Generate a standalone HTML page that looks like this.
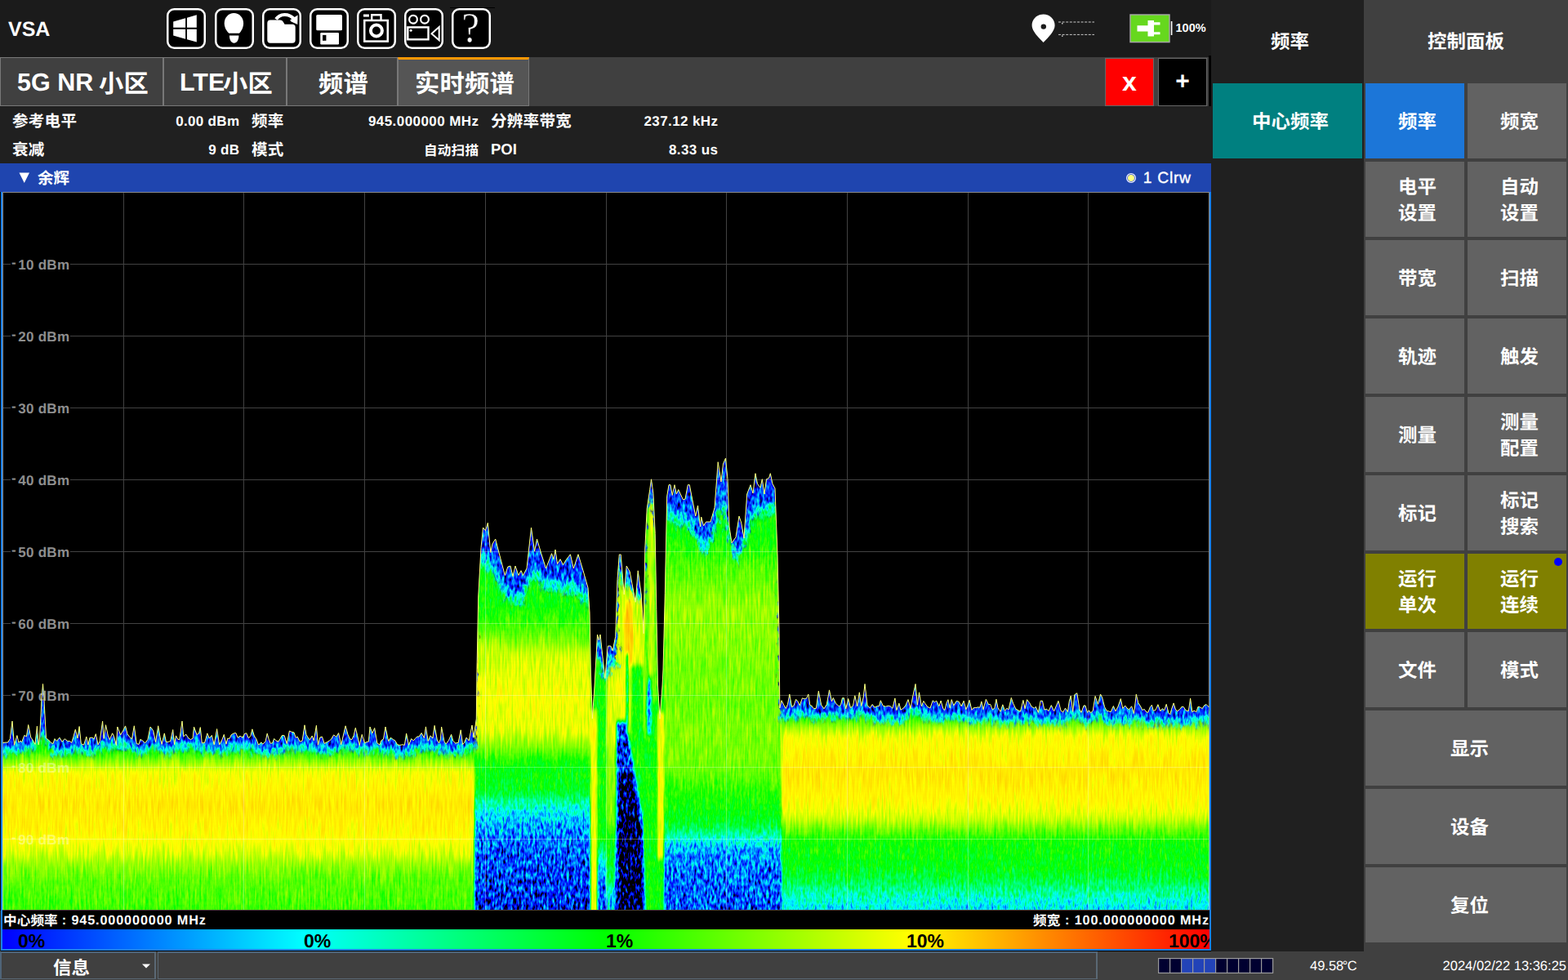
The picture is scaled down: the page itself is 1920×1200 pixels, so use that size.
<!DOCTYPE html>
<html lang="zh"><head><meta charset="utf-8"><title>VSA</title><style>
html,body{margin:0;padding:0;background:#000;}
body{width:1920px;height:1200px;position:relative;overflow:hidden;font-family:"Liberation Sans",sans-serif;text-rendering:geometricPrecision;-webkit-font-smoothing:antialiased;}
.b,.x,.t{position:absolute;display:block;}
.x{white-space:nowrap;}
.t{overflow:visible;}
.t text.g{font-family:"Liberation Sans","Noto Sans CJK SC",sans-serif;font-weight:bold;font-size:1000px;}
</style></head><body>
<div class="b" style="left:0px;top:0px;width:1483px;height:70px;background:#1b1b1b;"></div>
<div class="b" style="left:0px;top:70px;width:1483px;height:60px;background:#404040;"></div>
<div class="b" style="left:0px;top:130px;width:1483px;height:70px;background:#202020;"></div>
<div class="b" style="left:0px;top:200px;width:1483px;height:36px;background:#1f45af;"></div>
<div class="b" style="left:0px;top:235px;width:1483px;height:930px;background:#000;"></div>
<div class="b" style="left:0px;top:235px;width:1px;height:965px;background:#2a2a2a;"></div>
<div class="b" style="left:1483px;top:0px;width:187px;height:1165px;background:#202020;"></div>
<div class="b" style="left:1670px;top:0px;width:250px;height:1200px;background:#404040;"></div>
<div class="b" style="left:0px;top:1165px;width:1670px;height:35px;background:#404040;"></div>
<div class="b" style="left:1480px;top:68px;width:3px;height:62px;background:#000;"></div>
<div class="b" style="left:1480px;top:130px;width:3px;height:70px;background:#202020;"></div>
<div class="b" style="left:1480px;top:200px;width:3px;height:36px;background:#1f45af;"></div>
<div class="x" style="left:10.00px;top:20.00px;font-size:25.00px;line-height:32px;color:#fff;font-weight:bold;">VSA</div>
<svg class="t" style="left:204px;top:10px;width:48px;height:50px" viewBox="0 0 48 50"><rect x="1.25" y="1.25" width="45.5" height="47.5" rx="8" ry="8" fill="#000" stroke="#fff" stroke-width="2.5"/><g fill="#fff"><path d="M8.2 16.6L23.1 12.3V23.8H8.2Z"/><path d="M25 11.7L36.8 8.3V23.8H25Z"/><path d="M8.2 25.75H23.1V37.7L8.2 33.5Z"/><path d="M25 25.75H36.8V41.6L25 38.3Z"/></g></svg>
<svg class="t" style="left:263px;top:10px;width:48px;height:50px" viewBox="0 0 48 50"><rect x="1.25" y="1.25" width="45.5" height="47.5" rx="8" ry="8" fill="#000" stroke="#fff" stroke-width="2.5"/><g fill="#fff"><path d="M23.4 6C30 6 35.1 11.5 35.1 18.5C35.1 24 32.5 28 30 30.7H17.4C14.5 28 11.7 24 11.7 18.5C11.7 11.5 16.8 6 23.4 6Z"/><path d="M17.9 33.5H29.4C29.4 39 27 42.7 23.6 42.7C20.3 42.7 17.9 39 17.9 33.5Z"/></g></svg>
<svg class="t" style="left:321px;top:10px;width:48px;height:50px" viewBox="0 0 48 50"><rect x="1.25" y="1.25" width="45.5" height="47.5" rx="8" ry="8" fill="#000" stroke="#fff" stroke-width="2.5"/><g fill="#fff"><path d="M6.3 18.5Q6.3 14.6 10 14.6H22Q24.5 14.6 26 17L27.5 19.8H37Q40.7 19.8 40.7 23.5V39Q40.7 42.7 37 42.7H10Q6.3 42.7 6.3 39Z"/></g><path d="M17 13.5C22 6.5 32 6 39 13" fill="none" stroke="#fff" stroke-width="4.2"/><path d="M43.6 8.5L43.3 20L33 15.2Z" fill="#fff"/><path d="M22 13.5C26 10.5 31 10.8 35 15.3L33.5 17.5L27.5 18.8L25.5 15.5Z" fill="#000"/></svg>
<svg class="t" style="left:379px;top:10px;width:48px;height:50px" viewBox="0 0 48 50"><rect x="1.25" y="1.25" width="45.5" height="47.5" rx="8" ry="8" fill="#000" stroke="#fff" stroke-width="2.5"/><rect x="8.25" y="8.1" width="31.75" height="19.1" rx="1.5" fill="#fff"/><rect x="13.25" y="30" width="22.75" height="14.4" rx="1.2" fill="#fff"/><rect x="16" y="32.9" width="4.4" height="6.9" fill="#000"/></svg>
<svg class="t" style="left:437px;top:10px;width:48px;height:50px" viewBox="0 0 48 50"><rect x="1.25" y="1.25" width="45.5" height="47.5" rx="8" ry="8" fill="#000" stroke="#fff" stroke-width="2.5"/><g fill="none" stroke="#fff"><rect x="9.25" y="15" width="28.5" height="25.6" stroke-width="2.5"/><circle cx="23.9" cy="27.5" r="7" stroke-width="4"/><path d="M18.2 15V8.3H29.5V15" stroke-width="2.4"/></g><rect x="8" y="7.5" width="6.9" height="3.1" fill="#fff"/></svg>
<svg class="t" style="left:495px;top:10px;width:48px;height:50px" viewBox="0 0 48 50"><rect x="1.25" y="1.25" width="45.5" height="47.5" rx="8" ry="8" fill="#000" stroke="#fff" stroke-width="2.5"/><g fill="none" stroke="#fff" stroke-width="2.2"><circle cx="11" cy="13.75" r="4.9"/><circle cx="25" cy="13.75" r="4.9"/><rect x="4.3" y="23.4" width="25.2" height="14.9" stroke-width="2.4"/><path d="M33.5 31.2L42.7 23V39.2Z" stroke-width="2"/></g><circle cx="8.1" cy="27.3" r="1.5" fill="#fff"/></svg>
<svg class="t" style="left:553px;top:10px;width:48px;height:50px" viewBox="0 0 48 50"><rect x="1.25" y="1.25" width="45.5" height="47.5" rx="8" ry="8" fill="#000" stroke="#fff" stroke-width="2.5"/><path d="M22.84 32.4H20.94L20.32 23.93L23.72 23.2Q25.77 22.76 26.7 20.99Q27.62 19.22 27.62 15.82Q27.62 12.1 26.36 10.56Q25.1 9.03 21.92 9.03Q19.25 9.03 17.3 10.27L16.47 14.43H14.9V7.99Q18.66 6.9 21.92 6.9Q32 6.9 32 15.52Q32 19.65 30.09 22.16Q28.17 24.67 24.51 25.48L23.15 25.81ZM24.98 38.93Q24.98 40.18 24.16 41.09Q23.34 42 22.13 42Q20.89 42 20.07 41.09Q19.25 40.18 19.25 38.93Q19.25 37.64 20.08 36.75Q20.92 35.87 22.13 35.87Q23.32 35.87 24.15 36.74Q24.98 37.62 24.98 38.93Z" fill="#fff" stroke="#000" stroke-width="0.5"/></svg>
<div class="b" style="left:551px;top:8.6px;width:55px;height:1px;background:#000;"></div>
<svg class="t" style="left:1260px;top:14px;width:84px;height:42px" viewBox="1260 14 84 42"><path d="M1277.6 17.4C1285.5 17.4 1291.6 23.5 1291.6 31C1291.6 38 1284 45.5 1277.6 52C1271.2 45.5 1263.6 38 1263.6 31C1263.6 23.5 1269.7 17.4 1277.6 17.4Z" fill="#fff"/><circle cx="1277.8" cy="32.6" r="3.2" fill="#1b1b1b"/><g stroke="#c8c8c8" stroke-width="1" stroke-dasharray="3 1.6"><path d="M1296 27H1340"/><path d="M1296 42.4H1340"/></g><g fill="#c8c8c8"><rect x="1300" y="28" width="1.5" height="1.5"/><rect x="1300" y="43.4" width="1.5" height="1.5"/></g></svg>
<svg class="t" style="left:1380px;top:14px;width:60px;height:42px" viewBox="1380 14 60 42"><rect x="1384" y="18" width="48" height="33.6" fill="#66d81e" stroke="#a8a8a8" stroke-width="1.4"/><path d="M1392.5 31.2H1405.5V25H1413V27.3H1420.5V30.4H1413V39.2H1420.5V42.3H1413V44.6H1405.5V38.4H1392.5Z" fill="#fff"/><rect x="1433.8" y="26" width="1.6" height="17" fill="#fff"/></svg>
<div class="x" style="left:1439.50px;top:26.00px;font-size:14.50px;line-height:19px;color:#fff;font-weight:bold;">100%</div>
<div class="b" style="left:0px;top:70px;width:200px;height:60px;background:#404040;box-sizing:border-box;border:1px solid #787878;"></div>
<div class="b" style="left:200px;top:70px;width:151px;height:60px;background:#404040;box-sizing:border-box;border:1px solid #787878;"></div>
<div class="b" style="left:351px;top:70px;width:136px;height:60px;background:#404040;box-sizing:border-box;border:1px solid #787878;"></div>
<div class="b" style="left:487px;top:70px;width:161px;height:60px;background:#555555;box-sizing:border-box;border:1px solid #787878;border-top:3px solid #ff9800;"></div>
<div class="x" style="left:21.00px;top:81.00px;font-size:30.50px;line-height:40px;color:#fff;font-weight:bold;">5G NR</div>
<svg class="t" role="img" aria-label="小区" style="left:121.00px;top:85.75px;width:61.00px;height:30.50px;fill:#fff;" viewBox="0 -880 2000 1000"><text class="g" x="0" y="0">小区</text></svg>
<div class="x" style="left:220.00px;top:81.00px;font-size:30.50px;line-height:40px;color:#fff;font-weight:bold;">LTE</div>
<svg class="t" role="img" aria-label="小区" style="left:273.00px;top:85.75px;width:61.00px;height:30.50px;fill:#fff;" viewBox="0 -880 2000 1000"><text class="g" x="0" y="0">小区</text></svg>
<svg class="t" role="img" aria-label="频谱" style="left:390.00px;top:85.75px;width:61.00px;height:30.50px;fill:#fff;" viewBox="0 -880 2000 1000"><text class="g" x="0" y="0">频谱</text></svg>
<svg class="t" role="img" aria-label="实时频谱" style="left:508.00px;top:85.75px;width:122.00px;height:30.50px;fill:#fff;" viewBox="0 -880 4000 1000"><text class="g" x="0" y="0">实时频谱</text></svg>
<div class="b" style="left:1353px;top:70.5px;width:60px;height:59px;background:#ff0000;box-sizing:border-box;border:1px solid #666;"></div>
<div class="b" style="left:1418px;top:70.5px;width:60px;height:59px;background:#000000;box-sizing:border-box;border:1px solid #666;"></div>
<div class="x" style="left:1383.00px;transform:translateX(-50%);top:79.00px;font-size:32.00px;line-height:42px;color:#fff;font-weight:bold;">x</div>
<div class="x" style="left:1448.00px;transform:translateX(-50%);top:79.50px;font-size:30.00px;line-height:39px;color:#fff;font-weight:bold;">+</div>
<svg class="t" role="img" aria-label="参考电平" style="left:15.00px;top:138.10px;width:79.20px;height:19.80px;fill:#fff;" viewBox="0 -880 4000 1000"><text class="g" x="0" y="0">参考电平</text></svg>
<div class="x" style="right:1626.70px;top:137.80px;font-size:17.00px;line-height:22px;color:#fff;font-weight:bold;letter-spacing:0.30px;">0.00 dBm</div>
<svg class="t" role="img" aria-label="频率" style="left:308.00px;top:138.10px;width:39.60px;height:19.80px;fill:#fff;" viewBox="0 -880 2000 1000"><text class="g" x="0" y="0">频率</text></svg>
<div class="x" style="right:1333.57px;top:137.80px;font-size:17.00px;line-height:22px;color:#fff;font-weight:bold;letter-spacing:0.43px;">945.000000 MHz</div>
<svg class="t" role="img" aria-label="分辨率带宽" style="left:601.00px;top:138.10px;width:99.00px;height:19.80px;fill:#fff;" viewBox="0 -880 5000 1000"><text class="g" x="0" y="0">分辨率带宽</text></svg>
<div class="x" style="right:1040.60px;top:137.80px;font-size:17.00px;line-height:22px;color:#fff;font-weight:bold;letter-spacing:0.40px;">237.12 kHz</div>
<svg class="t" role="img" aria-label="衰减" style="left:15.00px;top:173.10px;width:39.60px;height:19.80px;fill:#fff;" viewBox="0 -880 2000 1000"><text class="g" x="0" y="0">衰减</text></svg>
<div class="x" style="right:1626.70px;top:172.80px;font-size:17.00px;line-height:22px;color:#fff;font-weight:bold;letter-spacing:0.30px;">9 dB</div>
<svg class="t" role="img" aria-label="模式" style="left:308.00px;top:173.10px;width:39.60px;height:19.80px;fill:#fff;" viewBox="0 -880 2000 1000"><text class="g" x="0" y="0">模式</text></svg>
<svg class="t" role="img" aria-label="自动扫描" style="left:518.80px;top:174.60px;width:67.20px;height:16.80px;fill:#fff;" viewBox="0 -880 4000 1000"><text class="g" x="0" y="0">自动扫描</text></svg>
<div class="x" style="left:601.00px;top:171.00px;font-size:18.50px;line-height:24px;color:#fff;font-weight:bold;">POI</div>
<div class="x" style="right:1040.60px;top:172.80px;font-size:17.00px;line-height:22px;color:#fff;font-weight:bold;letter-spacing:0.40px;">8.33 us</div>
<svg class="t" style="left:22.5px;top:211px;width:13.5px;height:13.5px" viewBox="0 0 14 14"><path d="M0.5 0.5H13.5L7 13.5Z" fill="#fff"/></svg>
<svg class="t" role="img" aria-label="余辉" style="left:45.50px;top:208.20px;width:39.20px;height:19.60px;fill:#fff;" viewBox="0 -880 2000 1000"><text class="g" x="0" y="0">余辉</text></svg>
<svg class="t" style="left:1378px;top:211px;width:14px;height:14px" viewBox="0 0 14 14"><circle cx="7" cy="7" r="4.6" fill="#ffff80" stroke="#2a50d0" stroke-width="1.2"/><circle cx="7" cy="7" r="5.4" fill="none" stroke="#e8e8ff" stroke-width="1.3"/></svg>
<div class="x" style="right:461.30px;top:206.00px;font-size:19.30px;line-height:25px;color:#fff;font-weight:normal;letter-spacing:0.70px;-webkit-text-stroke:0.35px #fff;">1 Clrw</div>
<svg class="t" style="left:0;top:235px;width:1483px;height:880px;overflow:hidden" viewBox="0 235 1483 880">
<defs>
<filter id="hm" filterUnits="userSpaceOnUse" x="-5" y="236" width="1495" height="895" color-interpolation-filters="sRGB"><feGaussianBlur in="SourceGraphic" stdDeviation="1.2 3" result="b"/><feTurbulence type="fractalNoise" baseFrequency="0.45 0.035" numOctaves="2" seed="5" result="nf0"/><feColorMatrix in="nf0" type="matrix" values="1 0 0 0 0  1 0 0 0 0  1 0 0 0 0  0 0 0 0 1" result="nf"/><feTurbulence type="fractalNoise" baseFrequency="0.36 0.13" numOctaves="2" seed="12" result="ns0"/><feColorMatrix in="ns0" type="matrix" values="1 0 0 0 0  1 0 0 0 0  1 0 0 0 0  0 0 0 0 1" result="ns"/><feComponentTransfer in="b" result="m"><feFuncR type="linear" slope="-1.6" intercept="1"/><feFuncG type="linear" slope="-1.6" intercept="1"/><feFuncB type="linear" slope="-1.6" intercept="1"/></feComponentTransfer><feComposite in="m" in2="ns" operator="arithmetic" k1="1" k2="0" k3="0" k4="0" result="t1"/><feComposite in="b" in2="nf" operator="arithmetic" k1="0" k2="1" k3="0.16" k4="-0.08" result="b0"/><feComposite in="b0" in2="t1" operator="arithmetic" k1="0" k2="1" k3="0.7" k4="0" result="v"/><feComponentTransfer in="m" result="mi"><feFuncR type="linear" slope="-1" intercept="1"/><feFuncG type="linear" slope="-1" intercept="1"/><feFuncB type="linear" slope="-1" intercept="1"/></feComponentTransfer><feComposite in="v" in2="mi" operator="arithmetic" k1="0" k2="1" k3="0.35" k4="-0.35" result="d"/><feComponentTransfer in="d"><feFuncR type="table" tableValues="0 0 0 0 0 0 .5 1 1 1 1"/><feFuncG type="table" tableValues="0 0 .5 1 1 1 1 1 .8 .5 0"/><feFuncB type="table" tableValues="0 1 1 1 .5 0 0 0 0 0 0"/></feComponentTransfer></filter>
<filter id="hf" filterUnits="userSpaceOnUse" x="-5" y="236" width="1495" height="895" color-interpolation-filters="sRGB"><feGaussianBlur in="SourceGraphic" stdDeviation="1.6 3.2" result="b"/><feTurbulence type="fractalNoise" baseFrequency="0.22 0.09" numOctaves="2" seed="3" result="n"/><feDisplacementMap in="b" in2="n" scale="16" xChannelSelector="G" yChannelSelector="R" result="dm"/><feTurbulence type="fractalNoise" baseFrequency="0.33 0.12" numOctaves="2" seed="21" result="s0"/><feColorMatrix in="s0" type="matrix" values="1 0 0 0 0  1 0 0 0 0  1 0 0 0 0  0 0 0 0 1" result="s1"/><feComposite in="dm" in2="s1" operator="arithmetic" k1="0" k2="1" k3="0.5" k4="-0.25" result="dn"/><feComposite in="dn" in2="dm" operator="in" result="dn2"/><feComponentTransfer in="dn2"><feFuncR type="table" tableValues="0 0 0 0 0 0 .5 1 1 1 1"/><feFuncG type="table" tableValues="0 0 .5 1 1 1 1 1 .8 .5 0"/><feFuncB type="table" tableValues="0 1 1 1 .5 0 0 0 0 0 0"/></feComponentTransfer></filter>
<clipPath id="env"><polygon points="3.0,1114.0 3.5,909.4 6.8,909.1 9.5,909.1 12.3,904.7 15.0,883.0 17.5,912.4 20.9,900.6 22.9,909.2 24.8,907.2 26.7,908.6 29.8,900.4 32.4,901.8 34.7,887.5 37.8,903.0 40.0,906.0 43.0,911.4 45.4,889.2 47.2,911.9 48.5,904.0 51.3,851.5 52.5,837.5 53.7,851.5 56.5,904.0 57.3,904.6 59.4,905.9 62.5,909.4 65.0,910.6 67.0,904.6 69.5,907.4 72.9,903.1 76.1,908.3 79.3,904.7 82.6,907.3 85.7,907.6 87.6,909.6 89.8,902.5 92.3,893.2 95.0,904.0 97.1,889.5 99.3,910.7 102.6,912.2 105.8,902.1 107.8,912.2 109.9,903.4 113.1,903.2 115.1,904.9 117.3,898.7 120.1,911.9 122.2,907.4 125.6,883.0 127.1,904.4 129.5,887.7 132.3,900.8 134.4,905.6 137.6,897.8 139.5,901.6 142.4,912.5 143.8,890.0 147.6,899.9 150.7,894.6 153.6,888.9 156.0,898.6 158.7,902.4 161.5,904.9 164.3,888.8 167.3,910.6 170.0,911.4 171.9,905.3 174.7,907.1 177.6,909.8 180.9,905.6 184.0,890.0 185.2,891.2 187.7,894.9 190.6,908.5 193.7,888.8 196.1,903.0 198.1,911.4 201.3,897.9 203.5,908.7 205.8,908.4 208.6,907.7 211.7,893.5 213.6,911.6 215.5,900.9 217.8,905.3 219.8,905.7 223.0,883.0 224.8,901.9 227.6,899.0 230.9,903.9 233.5,905.6 236.1,904.1 237.5,890.0 240.9,899.5 243.4,898.3 245.3,890.6 247.3,909.9 250.6,909.5 253.8,897.9 256.3,903.9 259.3,900.4 262.2,911.8 265.6,892.6 268.7,911.9 271.8,906.1 274.3,899.4 276.9,911.2 278.8,904.1 281.1,904.4 283.2,899.7 286.3,897.9 288.9,897.6 291.1,903.2 294.0,901.3 297.2,903.0 299.6,898.3 301.7,897.8 304.4,903.9 307.0,900.7 308.9,892.8 311.3,901.0 313.9,905.0 316.6,912.2 319.8,908.8 321.8,911.2 325.1,907.7 327.2,898.1 329.2,905.3 331.3,910.3 333.6,909.8 335.6,904.5 338.2,906.9 340.9,908.1 343.3,904.2 345.4,900.4 348.1,900.6 351.3,910.7 354.4,895.0 356.7,896.1 360.1,897.0 362.2,903.4 364.2,902.1 367.3,908.3 370.2,906.9 373.0,887.8 375.0,899.4 377.6,904.0 379.5,905.8 382.2,901.0 384.3,906.9 387.4,888.3 389.4,912.2 391.9,902.9 394.4,902.1 397.2,910.4 400.4,908.7 403.3,906.9 405.4,905.4 408.6,899.9 411.8,902.3 414.6,897.6 417.7,911.9 420.7,899.0 423.1,888.8 426.0,899.4 428.5,904.9 430.8,905.6 433.2,900.5 435.3,891.2 437.7,900.9 440.3,912.5 443.2,899.4 446.5,909.8 449.5,908.3 451.4,908.1 453.0,890.0 456.0,897.8 458.7,891.5 461.8,909.7 464.9,912.0 466.9,906.7 469.5,905.0 472.0,890.0 475.6,907.5 478.4,903.2 481.4,905.6 483.6,906.6 486.6,911.8 489.6,912.4 492.9,911.8 495.4,912.3 497.6,898.0 500.5,912.4 503.6,904.6 506.4,906.9 508.3,904.5 510.8,901.9 513.0,902.1 516.1,897.5 519.4,903.6 521.4,889.9 524.2,907.4 527.1,900.8 529.9,904.0 532.1,888.4 535.3,905.9 537.5,909.9 539.5,904.9 540.6,890.0 544.2,908.8 546.4,910.7 549.5,906.3 552.6,899.3 554.8,907.3 557.8,910.1 561.2,909.3 564.2,893.8 566.6,911.6 568.5,909.4 571.1,903.1 574.2,907.0 578.0,888.0 580.0,903.2 583.3,880.0 584.0,820.0 585.7,731.0 589.0,670.7 591.5,646.0 594.5,649.7 597.3,640.3 600.8,676.5 603.0,666.0 606.7,660.0 610.0,673.0 618.3,704.5 621.8,694.0 625.0,693.0 628.0,705.7 631.0,693.0 635.0,704.5 638.0,698.7 640.5,704.5 645.0,696.0 650.5,646.0 654.5,675.0 657.5,660.0 662.7,677.7 668.5,696.0 675.5,677.7 678.0,684.7 680.0,673.0 682.5,690.5 686.0,684.7 689.5,691.7 693.0,685.8 698.4,678.8 702.3,696.0 708.0,678.8 714.0,698.7 720.0,719.7 722.0,750.0 723.3,820.0 725.3,880.0 728.0,840.0 731.5,777.0 733.4,784.0 735.0,777.0 740.8,830.7 744.3,791.0 747.8,791.0 750.2,796.8 753.7,779.3 756.0,709.3 758.3,679.0 760.2,679.0 764.2,728.0 767.2,693.0 771.2,700.0 778.2,737.3 781.2,698.8 785.2,728.0 788.2,775.8 789.8,672.0 792.2,623.0 795.7,599.7 797.5,586.8 799.9,604.3 802.2,653.3 803.8,746.7 805.5,840.0 808.0,880.0 811.0,840.0 812.0,820.0 814.3,726.7 816.7,607.7 819.0,593.7 821.0,593.7 823.2,606.5 826.0,593.7 828.3,605.0 830.7,599.5 836.5,612.0 839.0,611.0 842.3,593.7 844.3,593.7 851.7,632.0 854.5,619.0 857.5,645.0 858.7,633.0 861.5,643.8 864.5,639.0 870.0,639.0 875.0,621.7 879.2,565.7 883.0,590.0 885.5,568.0 888.5,561.0 891.0,586.7 893.0,645.0 896.0,664.8 901.0,657.8 905.0,632.0 907.7,640.0 911.0,659.0 914.7,605.0 919.0,593.7 922.0,604.0 925.0,579.7 927.5,592.5 931.0,597.0 933.3,586.7 936.0,605.0 938.5,586.7 941.5,585.5 943.3,579.7 946.0,592.5 949.0,598.0 952.0,680.0 954.0,773.0 954.8,867.0 957.0,857.7 960.2,864.1 962.5,867.4 964.5,862.2 966.8,850.0 969.6,865.8 972.1,863.8 974.6,856.3 976.7,858.4 979.3,863.7 982.4,854.9 985.4,855.8 987.8,854.8 989.8,850.0 991.8,863.4 993.7,864.0 996.5,867.7 999.4,867.3 1002.3,846.2 1005.7,863.2 1009.0,867.8 1012.3,862.5 1015.5,844.9 1018.5,859.0 1020.3,854.5 1023.6,861.5 1025.7,863.2 1027.6,865.1 1029.6,862.8 1031.4,854.8 1033.5,854.7 1035.7,867.9 1038.7,855.5 1041.5,866.7 1044.5,864.2 1046.8,851.8 1049.7,864.7 1052.3,847.8 1054.7,864.5 1057.2,854.1 1059.0,837.5 1062.1,863.8 1065.3,866.8 1068.2,862.5 1071.0,866.2 1074.4,864.6 1076.3,864.7 1078.3,857.7 1081.3,864.3 1084.5,865.2 1087.7,864.2 1090.5,865.0 1092.9,867.3 1095.9,854.9 1097.8,869.7 1100.9,861.1 1102.9,869.1 1105.9,867.5 1108.9,863.7 1112.0,856.6 1114.9,867.6 1117.3,854.7 1121.0,837.5 1123.3,863.3 1125.5,847.8 1128.4,864.8 1130.9,858.4 1132.8,861.4 1135.8,865.5 1139.0,867.0 1142.2,857.8 1144.4,859.8 1146.7,858.2 1149.9,864.6 1152.1,858.0 1154.9,867.8 1156.9,869.4 1158.8,861.4 1160.9,856.7 1163.2,867.1 1165.2,856.6 1167.8,863.9 1171.2,858.3 1174.2,859.2 1177.1,864.8 1180.1,858.2 1182.9,868.7 1184.8,864.1 1187.1,857.3 1189.9,869.4 1192.0,866.8 1195.1,866.6 1197.4,865.9 1199.8,866.3 1201.8,858.9 1204.0,868.7 1207.3,856.3 1210.6,862.8 1212.7,862.4 1215.0,868.5 1217.7,867.7 1219.9,856.2 1221.9,866.5 1225.0,871.4 1227.8,862.8 1230.4,870.3 1233.1,867.2 1234.9,869.1 1238.3,854.4 1240.6,861.2 1243.7,867.8 1247.0,870.0 1249.5,871.1 1252.9,857.4 1255.1,867.8 1257.5,856.7 1260.6,860.5 1263.2,865.3 1266.5,867.2 1268.3,865.3 1271.4,872.4 1274.2,858.1 1276.5,858.3 1278.8,869.1 1281.7,868.3 1284.0,870.6 1287.3,863.6 1290.6,870.8 1293.6,863.8 1295.9,858.3 1299.2,870.5 1301.7,872.0 1304.5,867.1 1307.4,871.6 1309.3,858.5 1311.2,852.0 1313.7,871.4 1315.7,850.8 1318.8,848.7 1322.0,868.9 1324.0,872.4 1327.1,863.9 1329.0,864.0 1331.5,872.4 1333.5,869.8 1335.5,872.9 1338.2,870.3 1341.1,852.4 1344.5,862.3 1347.5,850.0 1349.6,853.9 1352.6,865.7 1355.3,870.5 1357.4,870.8 1360.1,871.7 1363.4,864.5 1366.0,870.9 1369.0,865.2 1372.3,855.6 1374.8,867.5 1377.7,864.0 1380.0,867.1 1382.5,868.8 1385.6,864.8 1388.6,873.6 1391.3,850.1 1393.8,860.6 1396.6,865.0 1399.0,869.7 1400.9,868.2 1403.9,872.0 1405.8,872.2 1408.4,865.6 1410.4,863.3 1412.3,870.4 1415.0,869.4 1417.9,862.7 1420.9,870.8 1423.2,867.7 1425.7,869.8 1428.2,862.3 1430.9,872.8 1432.8,874.7 1434.6,868.3 1437.1,860.9 1439.2,868.0 1441.3,871.0 1444.2,869.1 1447.2,865.2 1449.4,865.7 1452.2,870.1 1455.4,870.4 1457.6,855.0 1459.8,871.7 1462.0,870.2 1464.9,871.6 1467.0,865.3 1469.6,866.0 1472.1,867.6 1474.8,863.6 1477.1,862.6 1480.5,866.0 1481.0,1114.0"/></clipPath>
<linearGradient id="gl" gradientUnits="userSpaceOnUse" x1="0" y1="880" x2="0" y2="1113"><stop offset="0.0000" stop-color="#808080"/><stop offset="0.1717" stop-color="#858585"/><stop offset="0.2275" stop-color="#9e9e9e"/><stop offset="0.2833" stop-color="#b2b2b2"/><stop offset="0.4506" stop-color="#bebebe"/><stop offset="0.6223" stop-color="#b5b5b5"/><stop offset="0.7082" stop-color="#ababab"/><stop offset="0.7725" stop-color="#9c9c9c"/><stop offset="0.8498" stop-color="#919191"/><stop offset="1.0000" stop-color="#8c8c8c"/></linearGradient>
<linearGradient id="gr" gradientUnits="userSpaceOnUse" x1="0" y1="830" x2="0" y2="1114"><stop offset="0.0000" stop-color="#808080"/><stop offset="0.1690" stop-color="#858585"/><stop offset="0.2113" stop-color="#9e9e9e"/><stop offset="0.2570" stop-color="#b2b2b2"/><stop offset="0.4085" stop-color="#bebebe"/><stop offset="0.5458" stop-color="#b5b5b5"/><stop offset="0.6092" stop-color="#a8a8a8"/><stop offset="0.6549" stop-color="#949494"/><stop offset="0.7042" stop-color="#828282"/><stop offset="0.8239" stop-color="#7d7d7d"/><stop offset="0.8803" stop-color="#707070"/><stop offset="0.9296" stop-color="#5e5e5e"/><stop offset="0.9648" stop-color="#525252"/><stop offset="1.0000" stop-color="#4a4a4a"/></linearGradient>
<linearGradient id="gbl" gradientUnits="userSpaceOnUse" x1="0" y1="600" x2="0" y2="1113"><stop offset="0.0000" stop-color="#808080"/><stop offset="0.2729" stop-color="#808080"/><stop offset="0.3411" stop-color="#919191"/><stop offset="0.3899" stop-color="#a8a8a8"/><stop offset="0.4873" stop-color="#b2b2b2"/><stop offset="0.5750" stop-color="#adadad"/><stop offset="0.6140" stop-color="#999999"/><stop offset="0.6530" stop-color="#808080"/><stop offset="0.7173" stop-color="#7a7a7a"/><stop offset="0.7466" stop-color="#616161"/><stop offset="0.7758" stop-color="#474747"/><stop offset="0.8148" stop-color="#363636"/><stop offset="0.8772" stop-color="#292929"/><stop offset="1.0000" stop-color="#1f1f1f"/></linearGradient>
<linearGradient id="gbr" gradientUnits="userSpaceOnUse" x1="0" y1="540" x2="0" y2="1113"><stop offset="0.0000" stop-color="#808080"/><stop offset="0.1920" stop-color="#808080"/><stop offset="0.2705" stop-color="#8f8f8f"/><stop offset="0.3578" stop-color="#9e9e9e"/><stop offset="0.4538" stop-color="#999999"/><stop offset="0.5585" stop-color="#959595"/><stop offset="0.6283" stop-color="#999999"/><stop offset="0.7068" stop-color="#949494"/><stop offset="0.7504" stop-color="#878787"/><stop offset="0.7853" stop-color="#808080"/><stop offset="0.8202" stop-color="#787878"/><stop offset="0.8447" stop-color="#5c5c5c"/><stop offset="0.8726" stop-color="#3b3b3b"/><stop offset="0.9337" stop-color="#2e2e2e"/><stop offset="1.0000" stop-color="#292929"/></linearGradient>
<linearGradient id="gmb" gradientUnits="userSpaceOnUse" x1="0" y1="760" x2="0" y2="1113"><stop offset="0.0000" stop-color="#808080"/><stop offset="0.7649" stop-color="#808080"/><stop offset="0.8357" stop-color="#4c4c4c"/><stop offset="0.9065" stop-color="#2e2e2e"/><stop offset="1.0000" stop-color="#262626"/></linearGradient>
<linearGradient id="gmc" gradientUnits="userSpaceOnUse" x1="0" y1="780" x2="0" y2="1113"><stop offset="0.0000" stop-color="#808080"/><stop offset="0.0601" stop-color="#a8a8a8"/><stop offset="0.3604" stop-color="#adadad"/><stop offset="0.4505" stop-color="#9e9e9e"/><stop offset="0.6607" stop-color="#999999"/><stop offset="0.7508" stop-color="#808080"/><stop offset="0.8859" stop-color="#737373"/><stop offset="0.9610" stop-color="#4c4c4c"/><stop offset="1.0000" stop-color="#474747"/></linearGradient>
<linearGradient id="gmd" gradientUnits="userSpaceOnUse" x1="0" y1="660" x2="0" y2="900"><stop offset="0.0000" stop-color="#737373"/><stop offset="0.1667" stop-color="#8a8a8a"/><stop offset="0.2708" stop-color="#a8a8a8"/><stop offset="0.9167" stop-color="#b2b2b2"/><stop offset="1.0000" stop-color="#999999"/></linearGradient>
</defs>
<rect x="0" y="235" width="1483" height="880" fill="#000"/>
<path d="M151.5 236V1114M298.5 236V1114M446.5 236V1114M594.5 236V1114M742.5 236V1114M889.5 236V1114M1037.5 236V1114M1185.5 236V1114M1332.5 236V1114M4 323.5H1480M4 411.5H1480M4 499.5H1480M4 587.5H1480M4 675.5H1480M4 763.5H1480M4 851.5H1480M4 939.5H1480M4 1027.5H1480" stroke="#424242" stroke-width="1" fill="none"/>
<path d="M3.5 235V1115M1480.5 235V1115M3 235.5H1481" stroke="#8a8a8a" stroke-width="1" fill="none"/>
<path d="M3 1114.5H1481" stroke="#4a4038" stroke-width="1" fill="none"/>
<rect x="13" y="315.5" width="73" height="17" fill="#000"/>
<text x="14" y="329.8" font-family="Liberation Sans,sans-serif" font-weight="bold" font-size="17" letter-spacing=".3" fill="#8e8e8e"><tspan dy="-2.6">-</tspan><tspan dx="2.2" dy="2.6">10 dBm</tspan></text>
<rect x="13" y="403.5" width="73" height="17" fill="#000"/>
<text x="14" y="417.8" font-family="Liberation Sans,sans-serif" font-weight="bold" font-size="17" letter-spacing=".3" fill="#8e8e8e"><tspan dy="-2.6">-</tspan><tspan dx="2.2" dy="2.6">20 dBm</tspan></text>
<rect x="13" y="491.5" width="73" height="17" fill="#000"/>
<text x="14" y="505.8" font-family="Liberation Sans,sans-serif" font-weight="bold" font-size="17" letter-spacing=".3" fill="#8e8e8e"><tspan dy="-2.6">-</tspan><tspan dx="2.2" dy="2.6">30 dBm</tspan></text>
<rect x="13" y="579.5" width="73" height="17" fill="#000"/>
<text x="14" y="593.8" font-family="Liberation Sans,sans-serif" font-weight="bold" font-size="17" letter-spacing=".3" fill="#8e8e8e"><tspan dy="-2.6">-</tspan><tspan dx="2.2" dy="2.6">40 dBm</tspan></text>
<rect x="13" y="667.5" width="73" height="17" fill="#000"/>
<text x="14" y="681.8" font-family="Liberation Sans,sans-serif" font-weight="bold" font-size="17" letter-spacing=".3" fill="#8e8e8e"><tspan dy="-2.6">-</tspan><tspan dx="2.2" dy="2.6">50 dBm</tspan></text>
<rect x="13" y="755.5" width="73" height="17" fill="#000"/>
<text x="14" y="769.8" font-family="Liberation Sans,sans-serif" font-weight="bold" font-size="17" letter-spacing=".3" fill="#8e8e8e"><tspan dy="-2.6">-</tspan><tspan dx="2.2" dy="2.6">60 dBm</tspan></text>
<rect x="13" y="843.5" width="73" height="17" fill="#000"/>
<text x="14" y="857.8" font-family="Liberation Sans,sans-serif" font-weight="bold" font-size="17" letter-spacing=".3" fill="#8e8e8e"><tspan dy="-2.6">-</tspan><tspan dx="2.2" dy="2.6">70 dBm</tspan></text>
<rect x="13" y="931.5" width="73" height="17" fill="#000"/>
<text x="14" y="945.8" font-family="Liberation Sans,sans-serif" font-weight="bold" font-size="17" letter-spacing=".3" fill="#8e8e8e"><tspan dy="-2.6">-</tspan><tspan dx="2.2" dy="2.6">80 dBm</tspan></text>
<rect x="13" y="1019.5" width="73" height="17" fill="#000"/>
<text x="14" y="1033.8" font-family="Liberation Sans,sans-serif" font-weight="bold" font-size="17" letter-spacing=".3" fill="#8e8e8e"><tspan dy="-2.6">-</tspan><tspan dx="2.2" dy="2.6">90 dBm</tspan></text>
<g clip-path="url(#env)"><g filter="url(#hm)">
<rect x="-5" y="236" width="1495" height="895" fill="#000"/>
<rect x="-5" y="830" width="590" height="301" fill="url(#gl)"/>
<rect x="952" y="800" width="538" height="331" fill="url(#gr)"/>
<rect x="581" y="600" width="145" height="531" fill="url(#gbl)"/>
<rect x="809" y="540" width="148" height="591" fill="url(#gbr)"/>
<rect x="723" y="560" width="90" height="571" fill="#808080"/>
<rect x="723" y="868" width="8.5" height="263" fill="#b2b2b2"/>
<rect x="731.5" y="760" width="11" height="371" fill="url(#gmb)"/>
<rect x="742.5" y="780" width="13" height="351" fill="url(#gmc)"/>
<rect x="755" y="660" width="35" height="240" fill="url(#gmd)"/>
<rect x="773" y="815" width="15" height="85" fill="#808080"/>
<ellipse cx="770" cy="775" rx="5.5" ry="42" fill="#cccccc"/>
<rect x="767.3" y="800" width="1.8" height="90" fill="#333333"/>
<polygon points="755,884 766,884 787,1000 791,1131 752,1131 754.5,1000" fill="#212121"/>
<polygon points="758,952 772,945 785,1015 786,1131 757,1131" fill="#000000"/>
<rect x="791" y="600" width="13" height="260" fill="#919191"/>
<rect x="794.5" y="612" width="6" height="215" fill="#a8a8a8"/>
<ellipse cx="795" cy="865" rx="2.6" ry="36" fill="#333333"/>
<rect x="805" y="872" width="8" height="180" fill="#b2b2b2"/>
</g>
<g filter="url(#hf)">
<polygon points="0.5,922.6 3.5,922.6 5.5,920.3 7.5,917.8 9.5,918.9 11.5,918.9 13.5,918.2 15.5,918.2 17.5,918.0 19.5,917.7 21.5,917.2 23.5,917.9 25.5,918.5 27.5,916.3 29.5,915.8 31.5,916.1 33.5,916.1 35.5,916.0 37.5,914.2 39.5,915.2 41.5,913.4 43.5,908.3 45.5,903.6 47.5,901.8 49.5,901.7 51.5,901.4 53.5,901.6 55.5,903.8 57.5,903.7 59.5,905.9 61.5,912.3 63.5,918.5 65.5,920.6 67.5,920.9 69.5,921.0 71.5,920.6 73.5,920.2 75.5,920.0 77.5,920.3 79.5,920.5 81.5,920.4 83.5,919.5 85.5,918.4 87.5,917.8 89.5,916.5 91.5,917.0 93.5,917.5 95.5,917.7 97.5,917.0 99.5,917.8 101.5,918.8 103.5,919.4 105.5,919.7 107.5,920.8 109.5,919.6 111.5,919.3 113.5,919.3 115.5,918.7 117.5,915.7 119.5,915.3 121.5,913.6 123.5,912.9 125.5,912.8 127.5,913.2 129.5,912.0 131.5,911.2 133.5,912.4 135.5,913.6 137.5,912.8 139.5,914.2 141.5,914.1 143.5,912.9 145.5,911.4 147.5,911.2 149.5,911.1 151.5,910.4 153.5,911.5 155.5,911.4 157.5,911.2 159.5,912.8 161.5,914.8 163.5,916.7 165.5,917.8 167.5,918.6 169.5,919.4 171.5,919.6 173.5,920.7 175.5,920.1 177.5,918.0 179.5,916.1 181.5,915.7 183.5,915.3 185.5,913.4 187.5,912.2 189.5,912.4 191.5,912.7 193.5,913.4 195.5,915.3 197.5,916.9 199.5,917.4 201.5,917.5 203.5,917.9 205.5,919.2 207.5,918.3 209.5,918.2 211.5,919.0 213.5,917.3 215.5,915.1 217.5,914.3 219.5,913.8 221.5,914.6 223.5,914.0 225.5,914.5 227.5,914.4 229.5,912.7 231.5,912.9 233.5,914.1 235.5,913.7 237.5,913.0 239.5,913.9 241.5,914.5 243.5,914.5 245.5,913.9 247.5,915.3 249.5,916.0 251.5,916.3 253.5,917.5 255.5,918.9 257.5,917.0 259.5,916.4 261.5,916.9 263.5,917.8 265.5,917.7 267.5,918.0 269.5,918.8 271.5,918.3 273.5,918.2 275.5,918.9 277.5,918.2 279.5,916.8 281.5,916.0 283.5,916.1 285.5,915.8 287.5,915.0 289.5,914.8 291.5,914.3 293.5,914.1 295.5,914.5 297.5,915.0 299.5,914.9 301.5,914.0 303.5,914.0 305.5,914.3 307.5,915.0 309.5,916.4 311.5,917.7 313.5,918.7 315.5,919.5 317.5,920.3 319.5,920.7 321.5,921.3 323.5,921.9 325.5,922.0 327.5,921.3 329.5,920.9 331.5,920.6 333.5,920.3 335.5,920.1 337.5,920.2 339.5,919.6 341.5,919.0 343.5,919.0 345.5,918.4 347.5,917.2 349.5,916.0 351.5,914.8 353.5,914.5 355.5,914.8 357.5,915.3 359.5,915.6 361.5,915.4 363.5,915.2 365.5,914.6 367.5,915.1 369.5,915.8 371.5,916.3 373.5,916.3 375.5,916.3 377.5,915.3 379.5,913.4 381.5,914.9 383.5,916.4 385.5,916.6 387.5,916.8 389.5,917.3 391.5,918.1 393.5,918.4 395.5,919.2 397.5,921.0 399.5,919.9 401.5,919.5 403.5,919.4 405.5,918.8 407.5,917.9 409.5,918.1 411.5,917.6 413.5,916.4 415.5,914.7 417.5,914.2 419.5,914.5 421.5,914.9 423.5,915.4 425.5,915.1 427.5,912.9 429.5,912.5 431.5,914.0 433.5,915.8 435.5,916.2 437.5,916.6 439.5,917.1 441.5,917.5 443.5,918.4 445.5,918.3 447.5,917.9 449.5,916.3 451.5,915.1 453.5,915.9 455.5,916.4 457.5,916.5 459.5,916.2 461.5,916.0 463.5,916.2 465.5,916.3 467.5,917.7 469.5,918.7 471.5,918.3 473.5,917.7 475.5,917.3 477.5,917.7 479.5,918.5 481.5,920.6 483.5,922.3 485.5,922.8 487.5,923.6 489.5,922.9 491.5,923.1 493.5,923.5 495.5,922.9 497.5,922.3 499.5,921.5 501.5,920.5 503.5,919.4 505.5,918.3 507.5,918.3 509.5,917.5 511.5,916.7 513.5,915.1 515.5,914.8 517.5,914.7 519.5,914.5 521.5,914.6 523.5,913.7 525.5,913.4 527.5,914.1 529.5,914.9 531.5,916.4 533.5,915.5 535.5,915.6 537.5,916.5 539.5,917.2 541.5,918.7 543.5,919.3 545.5,918.9 547.5,918.7 549.5,919.3 551.5,920.9 553.5,921.3 555.5,919.9 557.5,919.2 559.5,919.7 561.5,920.3 563.5,920.4 565.5,920.2 567.5,919.2 569.5,917.0 571.5,916.1 573.5,916.6 575.5,916.6 577.5,915.2 579.5,914.0 582.5,914.0 582.5,919.0 579.5,919.0 577.5,920.2 575.5,921.6 573.5,921.6 571.5,921.1 569.5,922.0 567.5,924.2 565.5,925.2 563.5,925.4 561.5,925.3 559.5,924.7 557.5,924.2 555.5,924.9 553.5,926.3 551.5,925.9 549.5,924.3 547.5,923.7 545.5,923.9 543.5,924.3 541.5,923.7 539.5,922.2 537.5,921.5 535.5,920.6 533.5,920.5 531.5,921.4 529.5,919.9 527.5,919.1 525.5,918.4 523.5,918.7 521.5,919.6 519.5,919.5 517.5,919.7 515.5,919.8 513.5,920.1 511.5,921.7 509.5,922.5 507.5,923.3 505.5,923.3 503.5,924.4 501.5,925.5 499.5,926.5 497.5,927.3 495.5,927.9 493.5,928.5 491.5,928.1 489.5,927.9 487.5,928.6 485.5,927.8 483.5,927.3 481.5,925.6 479.5,923.5 477.5,922.7 475.5,922.3 473.5,922.7 471.5,923.3 469.5,923.7 467.5,922.7 465.5,921.3 463.5,921.2 461.5,921.0 459.5,921.2 457.5,921.5 455.5,921.4 453.5,920.9 451.5,920.1 449.5,921.3 447.5,922.9 445.5,923.3 443.5,923.4 441.5,922.5 439.5,922.1 437.5,921.6 435.5,921.2 433.5,920.8 431.5,919.0 429.5,917.5 427.5,917.9 425.5,920.1 423.5,920.4 421.5,919.9 419.5,919.5 417.5,919.2 415.5,919.7 413.5,921.4 411.5,922.6 409.5,923.1 407.5,922.9 405.5,923.8 403.5,924.4 401.5,924.5 399.5,924.9 397.5,926.0 395.5,924.2 393.5,923.4 391.5,923.1 389.5,922.3 387.5,921.8 385.5,921.6 383.5,921.4 381.5,919.9 379.5,918.4 377.5,920.3 375.5,921.3 373.5,921.3 371.5,921.3 369.5,920.8 367.5,920.1 365.5,919.6 363.5,920.2 361.5,920.4 359.5,920.6 357.5,920.3 355.5,919.8 353.5,919.5 351.5,919.8 349.5,921.0 347.5,922.2 345.5,923.4 343.5,924.0 341.5,924.0 339.5,924.6 337.5,925.2 335.5,925.1 333.5,925.3 331.5,925.6 329.5,925.9 327.5,926.3 325.5,927.0 323.5,926.9 321.5,926.3 319.5,925.7 317.5,925.3 315.5,924.5 313.5,923.7 311.5,922.7 309.5,921.4 307.5,920.0 305.5,919.3 303.5,919.0 301.5,919.0 299.5,919.9 297.5,920.0 295.5,919.5 293.5,919.1 291.5,919.3 289.5,919.8 287.5,920.0 285.5,920.8 283.5,921.1 281.5,921.0 279.5,921.8 277.5,923.2 275.5,923.9 273.5,923.2 271.5,923.3 269.5,923.8 267.5,923.0 265.5,922.7 263.5,922.8 261.5,921.9 259.5,921.4 257.5,922.0 255.5,923.9 253.5,922.5 251.5,921.3 249.5,921.0 247.5,920.3 245.5,918.9 243.5,919.5 241.5,919.5 239.5,918.9 237.5,918.0 235.5,918.7 233.5,919.1 231.5,917.9 229.5,917.7 227.5,919.4 225.5,919.5 223.5,919.0 221.5,919.6 219.5,918.8 217.5,919.3 215.5,920.1 213.5,922.3 211.5,924.0 209.5,923.2 207.5,923.3 205.5,924.2 203.5,922.9 201.5,922.5 199.5,922.4 197.5,921.9 195.5,920.3 193.5,918.4 191.5,917.7 189.5,917.4 187.5,917.2 185.5,918.4 183.5,920.3 181.5,920.7 179.5,921.1 177.5,923.0 175.5,925.1 173.5,925.7 171.5,924.6 169.5,924.4 167.5,923.6 165.5,922.8 163.5,921.7 161.5,919.8 159.5,917.8 157.5,916.2 155.5,916.4 153.5,916.5 151.5,915.4 149.5,916.1 147.5,916.2 145.5,916.4 143.5,917.9 141.5,919.1 139.5,919.2 137.5,917.8 135.5,918.6 133.5,917.4 131.5,916.2 129.5,917.0 127.5,918.2 125.5,917.8 123.5,917.9 121.5,918.6 119.5,920.3 117.5,920.7 115.5,923.7 113.5,924.3 111.5,924.3 109.5,924.6 107.5,925.8 105.5,924.7 103.5,924.4 101.5,923.8 99.5,922.8 97.5,922.0 95.5,922.7 93.5,922.5 91.5,922.0 89.5,921.5 87.5,922.8 85.5,923.4 83.5,924.5 81.5,925.4 79.5,925.5 77.5,925.3 75.5,925.0 73.5,925.2 71.5,925.6 69.5,926.0 67.5,925.9 65.5,925.6 63.5,923.5 61.5,917.3 59.5,910.9 57.5,908.7 55.5,908.8 53.5,906.6 51.5,906.4 49.5,906.7 47.5,906.8 45.5,908.6 43.5,913.3 41.5,918.4 39.5,920.2 37.5,919.2 35.5,921.0 33.5,921.1 31.5,921.1 29.5,920.8 27.5,921.3 25.5,923.5 23.5,922.9 21.5,922.2 19.5,922.7 17.5,923.0 15.5,923.2 13.5,923.2 11.5,923.9 9.5,923.9 7.5,922.8 5.5,925.3 3.5,927.6 0.5,927.6" fill="#6b6b6b"/>
<polygon points="0.5,918.6 3.5,918.6 5.5,916.3 7.5,913.8 9.5,914.9 11.5,914.9 13.5,914.2 15.5,914.2 17.5,914.0 19.5,913.7 21.5,913.2 23.5,913.9 25.5,914.5 27.5,912.3 29.5,911.8 31.5,912.1 33.5,912.1 35.5,912.0 37.5,910.2 39.5,911.2 41.5,909.4 43.5,904.3 45.5,899.6 47.5,897.8 49.5,897.7 51.5,897.4 53.5,897.6 55.5,899.8 57.5,899.7 59.5,901.9 61.5,908.3 63.5,914.5 65.5,916.6 67.5,916.9 69.5,917.0 71.5,916.6 73.5,916.2 75.5,916.0 77.5,916.3 79.5,916.5 81.5,916.4 83.5,915.5 85.5,914.4 87.5,913.8 89.5,912.5 91.5,913.0 93.5,913.5 95.5,913.7 97.5,913.0 99.5,913.8 101.5,914.8 103.5,915.4 105.5,915.7 107.5,916.8 109.5,915.6 111.5,915.3 113.5,915.3 115.5,914.7 117.5,911.7 119.5,911.3 121.5,909.6 123.5,908.9 125.5,908.8 127.5,909.2 129.5,908.0 131.5,907.2 133.5,908.4 135.5,909.6 137.5,908.8 139.5,910.2 141.5,910.1 143.5,908.9 145.5,907.4 147.5,907.2 149.5,907.1 151.5,906.4 153.5,907.5 155.5,907.4 157.5,907.2 159.5,908.8 161.5,910.8 163.5,912.7 165.5,913.8 167.5,914.6 169.5,915.4 171.5,915.6 173.5,916.7 175.5,916.1 177.5,914.0 179.5,912.1 181.5,911.7 183.5,911.3 185.5,909.4 187.5,908.2 189.5,908.4 191.5,908.7 193.5,909.4 195.5,911.3 197.5,912.9 199.5,913.4 201.5,913.5 203.5,913.9 205.5,915.2 207.5,914.3 209.5,914.2 211.5,915.0 213.5,913.3 215.5,911.1 217.5,910.3 219.5,909.8 221.5,910.6 223.5,910.0 225.5,910.5 227.5,910.4 229.5,908.7 231.5,908.9 233.5,910.1 235.5,909.7 237.5,909.0 239.5,909.9 241.5,910.5 243.5,910.5 245.5,909.9 247.5,911.3 249.5,912.0 251.5,912.3 253.5,913.5 255.5,914.9 257.5,913.0 259.5,912.4 261.5,912.9 263.5,913.8 265.5,913.7 267.5,914.0 269.5,914.8 271.5,914.3 273.5,914.2 275.5,914.9 277.5,914.2 279.5,912.8 281.5,912.0 283.5,912.1 285.5,911.8 287.5,911.0 289.5,910.8 291.5,910.3 293.5,910.1 295.5,910.5 297.5,911.0 299.5,910.9 301.5,910.0 303.5,910.0 305.5,910.3 307.5,911.0 309.5,912.4 311.5,913.7 313.5,914.7 315.5,915.5 317.5,916.3 319.5,916.7 321.5,917.3 323.5,917.9 325.5,918.0 327.5,917.3 329.5,916.9 331.5,916.6 333.5,916.3 335.5,916.1 337.5,916.2 339.5,915.6 341.5,915.0 343.5,915.0 345.5,914.4 347.5,913.2 349.5,912.0 351.5,910.8 353.5,910.5 355.5,910.8 357.5,911.3 359.5,911.6 361.5,911.4 363.5,911.2 365.5,910.6 367.5,911.1 369.5,911.8 371.5,912.3 373.5,912.3 375.5,912.3 377.5,911.3 379.5,909.4 381.5,910.9 383.5,912.4 385.5,912.6 387.5,912.8 389.5,913.3 391.5,914.1 393.5,914.4 395.5,915.2 397.5,917.0 399.5,915.9 401.5,915.5 403.5,915.4 405.5,914.8 407.5,913.9 409.5,914.1 411.5,913.6 413.5,912.4 415.5,910.7 417.5,910.2 419.5,910.5 421.5,910.9 423.5,911.4 425.5,911.1 427.5,908.9 429.5,908.5 431.5,910.0 433.5,911.8 435.5,912.2 437.5,912.6 439.5,913.1 441.5,913.5 443.5,914.4 445.5,914.3 447.5,913.9 449.5,912.3 451.5,911.1 453.5,911.9 455.5,912.4 457.5,912.5 459.5,912.2 461.5,912.0 463.5,912.2 465.5,912.3 467.5,913.7 469.5,914.7 471.5,914.3 473.5,913.7 475.5,913.3 477.5,913.7 479.5,914.5 481.5,916.6 483.5,918.3 485.5,918.8 487.5,919.6 489.5,918.9 491.5,919.1 493.5,919.5 495.5,918.9 497.5,918.3 499.5,917.5 501.5,916.5 503.5,915.4 505.5,914.3 507.5,914.3 509.5,913.5 511.5,912.7 513.5,911.1 515.5,910.8 517.5,910.7 519.5,910.5 521.5,910.6 523.5,909.7 525.5,909.4 527.5,910.1 529.5,910.9 531.5,912.4 533.5,911.5 535.5,911.6 537.5,912.5 539.5,913.2 541.5,914.7 543.5,915.3 545.5,914.9 547.5,914.7 549.5,915.3 551.5,916.9 553.5,917.3 555.5,915.9 557.5,915.2 559.5,915.7 561.5,916.3 563.5,916.4 565.5,916.2 567.5,915.2 569.5,913.0 571.5,912.1 573.5,912.6 575.5,912.6 577.5,911.2 579.5,910.0 582.5,910.0 582.5,914.0 579.5,914.0 577.5,915.2 575.5,916.6 573.5,916.6 571.5,916.1 569.5,917.0 567.5,919.2 565.5,920.2 563.5,920.4 561.5,920.3 559.5,919.7 557.5,919.2 555.5,919.9 553.5,921.3 551.5,920.9 549.5,919.3 547.5,918.7 545.5,918.9 543.5,919.3 541.5,918.7 539.5,917.2 537.5,916.5 535.5,915.6 533.5,915.5 531.5,916.4 529.5,914.9 527.5,914.1 525.5,913.4 523.5,913.7 521.5,914.6 519.5,914.5 517.5,914.7 515.5,914.8 513.5,915.1 511.5,916.7 509.5,917.5 507.5,918.3 505.5,918.3 503.5,919.4 501.5,920.5 499.5,921.5 497.5,922.3 495.5,922.9 493.5,923.5 491.5,923.1 489.5,922.9 487.5,923.6 485.5,922.8 483.5,922.3 481.5,920.6 479.5,918.5 477.5,917.7 475.5,917.3 473.5,917.7 471.5,918.3 469.5,918.7 467.5,917.7 465.5,916.3 463.5,916.2 461.5,916.0 459.5,916.2 457.5,916.5 455.5,916.4 453.5,915.9 451.5,915.1 449.5,916.3 447.5,917.9 445.5,918.3 443.5,918.4 441.5,917.5 439.5,917.1 437.5,916.6 435.5,916.2 433.5,915.8 431.5,914.0 429.5,912.5 427.5,912.9 425.5,915.1 423.5,915.4 421.5,914.9 419.5,914.5 417.5,914.2 415.5,914.7 413.5,916.4 411.5,917.6 409.5,918.1 407.5,917.9 405.5,918.8 403.5,919.4 401.5,919.5 399.5,919.9 397.5,921.0 395.5,919.2 393.5,918.4 391.5,918.1 389.5,917.3 387.5,916.8 385.5,916.6 383.5,916.4 381.5,914.9 379.5,913.4 377.5,915.3 375.5,916.3 373.5,916.3 371.5,916.3 369.5,915.8 367.5,915.1 365.5,914.6 363.5,915.2 361.5,915.4 359.5,915.6 357.5,915.3 355.5,914.8 353.5,914.5 351.5,914.8 349.5,916.0 347.5,917.2 345.5,918.4 343.5,919.0 341.5,919.0 339.5,919.6 337.5,920.2 335.5,920.1 333.5,920.3 331.5,920.6 329.5,920.9 327.5,921.3 325.5,922.0 323.5,921.9 321.5,921.3 319.5,920.7 317.5,920.3 315.5,919.5 313.5,918.7 311.5,917.7 309.5,916.4 307.5,915.0 305.5,914.3 303.5,914.0 301.5,914.0 299.5,914.9 297.5,915.0 295.5,914.5 293.5,914.1 291.5,914.3 289.5,914.8 287.5,915.0 285.5,915.8 283.5,916.1 281.5,916.0 279.5,916.8 277.5,918.2 275.5,918.9 273.5,918.2 271.5,918.3 269.5,918.8 267.5,918.0 265.5,917.7 263.5,917.8 261.5,916.9 259.5,916.4 257.5,917.0 255.5,918.9 253.5,917.5 251.5,916.3 249.5,916.0 247.5,915.3 245.5,913.9 243.5,914.5 241.5,914.5 239.5,913.9 237.5,913.0 235.5,913.7 233.5,914.1 231.5,912.9 229.5,912.7 227.5,914.4 225.5,914.5 223.5,914.0 221.5,914.6 219.5,913.8 217.5,914.3 215.5,915.1 213.5,917.3 211.5,919.0 209.5,918.2 207.5,918.3 205.5,919.2 203.5,917.9 201.5,917.5 199.5,917.4 197.5,916.9 195.5,915.3 193.5,913.4 191.5,912.7 189.5,912.4 187.5,912.2 185.5,913.4 183.5,915.3 181.5,915.7 179.5,916.1 177.5,918.0 175.5,920.1 173.5,920.7 171.5,919.6 169.5,919.4 167.5,918.6 165.5,917.8 163.5,916.7 161.5,914.8 159.5,912.8 157.5,911.2 155.5,911.4 153.5,911.5 151.5,910.4 149.5,911.1 147.5,911.2 145.5,911.4 143.5,912.9 141.5,914.1 139.5,914.2 137.5,912.8 135.5,913.6 133.5,912.4 131.5,911.2 129.5,912.0 127.5,913.2 125.5,912.8 123.5,912.9 121.5,913.6 119.5,915.3 117.5,915.7 115.5,918.7 113.5,919.3 111.5,919.3 109.5,919.6 107.5,920.8 105.5,919.7 103.5,919.4 101.5,918.8 99.5,917.8 97.5,917.0 95.5,917.7 93.5,917.5 91.5,917.0 89.5,916.5 87.5,917.8 85.5,918.4 83.5,919.5 81.5,920.4 79.5,920.5 77.5,920.3 75.5,920.0 73.5,920.2 71.5,920.6 69.5,921.0 67.5,920.9 65.5,920.6 63.5,918.5 61.5,912.3 59.5,905.9 57.5,903.7 55.5,903.8 53.5,901.6 51.5,901.4 49.5,901.7 47.5,901.8 45.5,903.6 43.5,908.3 41.5,913.4 39.5,915.2 37.5,914.2 35.5,916.0 33.5,916.1 31.5,916.1 29.5,915.8 27.5,916.3 25.5,918.5 23.5,917.9 21.5,917.2 19.5,917.7 17.5,918.0 15.5,918.2 13.5,918.2 11.5,918.9 9.5,918.9 7.5,917.8 5.5,920.3 3.5,922.6 0.5,922.6" fill="#4c4c4c"/>
<polygon points="0.5,758.6 3.5,758.6 5.5,756.3 7.5,753.8 9.5,754.9 11.5,754.9 13.5,754.2 15.5,754.2 17.5,754.0 19.5,753.7 21.5,753.2 23.5,753.9 25.5,754.5 27.5,752.3 29.5,751.8 31.5,752.1 33.5,752.1 35.5,752.0 37.5,750.2 39.5,751.2 41.5,749.4 43.5,744.3 45.5,739.6 47.5,737.8 49.5,737.7 51.5,737.4 53.5,737.6 55.5,739.8 57.5,739.7 59.5,741.9 61.5,748.3 63.5,754.5 65.5,756.6 67.5,756.9 69.5,757.0 71.5,756.6 73.5,756.2 75.5,756.0 77.5,756.3 79.5,756.5 81.5,756.4 83.5,755.5 85.5,754.4 87.5,753.8 89.5,752.5 91.5,753.0 93.5,753.5 95.5,753.7 97.5,753.0 99.5,753.8 101.5,754.8 103.5,755.4 105.5,755.7 107.5,756.8 109.5,755.6 111.5,755.3 113.5,755.3 115.5,754.7 117.5,751.7 119.5,751.3 121.5,749.6 123.5,748.9 125.5,748.8 127.5,749.2 129.5,748.0 131.5,747.2 133.5,748.4 135.5,749.6 137.5,748.8 139.5,750.2 141.5,750.1 143.5,748.9 145.5,747.4 147.5,747.2 149.5,747.1 151.5,746.4 153.5,747.5 155.5,747.4 157.5,747.2 159.5,748.8 161.5,750.8 163.5,752.7 165.5,753.8 167.5,754.6 169.5,755.4 171.5,755.6 173.5,756.7 175.5,756.1 177.5,754.0 179.5,752.1 181.5,751.7 183.5,751.3 185.5,749.4 187.5,748.2 189.5,748.4 191.5,748.7 193.5,749.4 195.5,751.3 197.5,752.9 199.5,753.4 201.5,753.5 203.5,753.9 205.5,755.2 207.5,754.3 209.5,754.2 211.5,755.0 213.5,753.3 215.5,751.1 217.5,750.3 219.5,749.8 221.5,750.6 223.5,750.0 225.5,750.5 227.5,750.4 229.5,748.7 231.5,748.9 233.5,750.1 235.5,749.7 237.5,749.0 239.5,749.9 241.5,750.5 243.5,750.5 245.5,749.9 247.5,751.3 249.5,752.0 251.5,752.3 253.5,753.5 255.5,754.9 257.5,753.0 259.5,752.4 261.5,752.9 263.5,753.8 265.5,753.7 267.5,754.0 269.5,754.8 271.5,754.3 273.5,754.2 275.5,754.9 277.5,754.2 279.5,752.8 281.5,752.0 283.5,752.1 285.5,751.8 287.5,751.0 289.5,750.8 291.5,750.3 293.5,750.1 295.5,750.5 297.5,751.0 299.5,750.9 301.5,750.0 303.5,750.0 305.5,750.3 307.5,751.0 309.5,752.4 311.5,753.7 313.5,754.7 315.5,755.5 317.5,756.3 319.5,756.7 321.5,757.3 323.5,757.9 325.5,758.0 327.5,757.3 329.5,756.9 331.5,756.6 333.5,756.3 335.5,756.1 337.5,756.2 339.5,755.6 341.5,755.0 343.5,755.0 345.5,754.4 347.5,753.2 349.5,752.0 351.5,750.8 353.5,750.5 355.5,750.8 357.5,751.3 359.5,751.6 361.5,751.4 363.5,751.2 365.5,750.6 367.5,751.1 369.5,751.8 371.5,752.3 373.5,752.3 375.5,752.3 377.5,751.3 379.5,749.4 381.5,750.9 383.5,752.4 385.5,752.6 387.5,752.8 389.5,753.3 391.5,754.1 393.5,754.4 395.5,755.2 397.5,757.0 399.5,755.9 401.5,755.5 403.5,755.4 405.5,754.8 407.5,753.9 409.5,754.1 411.5,753.6 413.5,752.4 415.5,750.7 417.5,750.2 419.5,750.5 421.5,750.9 423.5,751.4 425.5,751.1 427.5,748.9 429.5,748.5 431.5,750.0 433.5,751.8 435.5,752.2 437.5,752.6 439.5,753.1 441.5,753.5 443.5,754.4 445.5,754.3 447.5,753.9 449.5,752.3 451.5,751.1 453.5,751.9 455.5,752.4 457.5,752.5 459.5,752.2 461.5,752.0 463.5,752.2 465.5,752.3 467.5,753.7 469.5,754.7 471.5,754.3 473.5,753.7 475.5,753.3 477.5,753.7 479.5,754.5 481.5,756.6 483.5,758.3 485.5,758.8 487.5,759.6 489.5,758.9 491.5,759.1 493.5,759.5 495.5,758.9 497.5,758.3 499.5,757.5 501.5,756.5 503.5,755.4 505.5,754.3 507.5,754.3 509.5,753.5 511.5,752.7 513.5,751.1 515.5,750.8 517.5,750.7 519.5,750.5 521.5,750.6 523.5,749.7 525.5,749.4 527.5,750.1 529.5,750.9 531.5,752.4 533.5,751.5 535.5,751.6 537.5,752.5 539.5,753.2 541.5,754.7 543.5,755.3 545.5,754.9 547.5,754.7 549.5,755.3 551.5,756.9 553.5,757.3 555.5,755.9 557.5,755.2 559.5,755.7 561.5,756.3 563.5,756.4 565.5,756.2 567.5,755.2 569.5,753.0 571.5,752.1 573.5,752.6 575.5,752.6 577.5,751.2 579.5,750.0 582.5,750.0 582.5,910.0 579.5,910.0 577.5,911.2 575.5,912.6 573.5,912.6 571.5,912.1 569.5,913.0 567.5,915.2 565.5,916.2 563.5,916.4 561.5,916.3 559.5,915.7 557.5,915.2 555.5,915.9 553.5,917.3 551.5,916.9 549.5,915.3 547.5,914.7 545.5,914.9 543.5,915.3 541.5,914.7 539.5,913.2 537.5,912.5 535.5,911.6 533.5,911.5 531.5,912.4 529.5,910.9 527.5,910.1 525.5,909.4 523.5,909.7 521.5,910.6 519.5,910.5 517.5,910.7 515.5,910.8 513.5,911.1 511.5,912.7 509.5,913.5 507.5,914.3 505.5,914.3 503.5,915.4 501.5,916.5 499.5,917.5 497.5,918.3 495.5,918.9 493.5,919.5 491.5,919.1 489.5,918.9 487.5,919.6 485.5,918.8 483.5,918.3 481.5,916.6 479.5,914.5 477.5,913.7 475.5,913.3 473.5,913.7 471.5,914.3 469.5,914.7 467.5,913.7 465.5,912.3 463.5,912.2 461.5,912.0 459.5,912.2 457.5,912.5 455.5,912.4 453.5,911.9 451.5,911.1 449.5,912.3 447.5,913.9 445.5,914.3 443.5,914.4 441.5,913.5 439.5,913.1 437.5,912.6 435.5,912.2 433.5,911.8 431.5,910.0 429.5,908.5 427.5,908.9 425.5,911.1 423.5,911.4 421.5,910.9 419.5,910.5 417.5,910.2 415.5,910.7 413.5,912.4 411.5,913.6 409.5,914.1 407.5,913.9 405.5,914.8 403.5,915.4 401.5,915.5 399.5,915.9 397.5,917.0 395.5,915.2 393.5,914.4 391.5,914.1 389.5,913.3 387.5,912.8 385.5,912.6 383.5,912.4 381.5,910.9 379.5,909.4 377.5,911.3 375.5,912.3 373.5,912.3 371.5,912.3 369.5,911.8 367.5,911.1 365.5,910.6 363.5,911.2 361.5,911.4 359.5,911.6 357.5,911.3 355.5,910.8 353.5,910.5 351.5,910.8 349.5,912.0 347.5,913.2 345.5,914.4 343.5,915.0 341.5,915.0 339.5,915.6 337.5,916.2 335.5,916.1 333.5,916.3 331.5,916.6 329.5,916.9 327.5,917.3 325.5,918.0 323.5,917.9 321.5,917.3 319.5,916.7 317.5,916.3 315.5,915.5 313.5,914.7 311.5,913.7 309.5,912.4 307.5,911.0 305.5,910.3 303.5,910.0 301.5,910.0 299.5,910.9 297.5,911.0 295.5,910.5 293.5,910.1 291.5,910.3 289.5,910.8 287.5,911.0 285.5,911.8 283.5,912.1 281.5,912.0 279.5,912.8 277.5,914.2 275.5,914.9 273.5,914.2 271.5,914.3 269.5,914.8 267.5,914.0 265.5,913.7 263.5,913.8 261.5,912.9 259.5,912.4 257.5,913.0 255.5,914.9 253.5,913.5 251.5,912.3 249.5,912.0 247.5,911.3 245.5,909.9 243.5,910.5 241.5,910.5 239.5,909.9 237.5,909.0 235.5,909.7 233.5,910.1 231.5,908.9 229.5,908.7 227.5,910.4 225.5,910.5 223.5,910.0 221.5,910.6 219.5,909.8 217.5,910.3 215.5,911.1 213.5,913.3 211.5,915.0 209.5,914.2 207.5,914.3 205.5,915.2 203.5,913.9 201.5,913.5 199.5,913.4 197.5,912.9 195.5,911.3 193.5,909.4 191.5,908.7 189.5,908.4 187.5,908.2 185.5,909.4 183.5,911.3 181.5,911.7 179.5,912.1 177.5,914.0 175.5,916.1 173.5,916.7 171.5,915.6 169.5,915.4 167.5,914.6 165.5,913.8 163.5,912.7 161.5,910.8 159.5,908.8 157.5,907.2 155.5,907.4 153.5,907.5 151.5,906.4 149.5,907.1 147.5,907.2 145.5,907.4 143.5,908.9 141.5,910.1 139.5,910.2 137.5,908.8 135.5,909.6 133.5,908.4 131.5,907.2 129.5,908.0 127.5,909.2 125.5,908.8 123.5,908.9 121.5,909.6 119.5,911.3 117.5,911.7 115.5,914.7 113.5,915.3 111.5,915.3 109.5,915.6 107.5,916.8 105.5,915.7 103.5,915.4 101.5,914.8 99.5,913.8 97.5,913.0 95.5,913.7 93.5,913.5 91.5,913.0 89.5,912.5 87.5,913.8 85.5,914.4 83.5,915.5 81.5,916.4 79.5,916.5 77.5,916.3 75.5,916.0 73.5,916.2 71.5,916.6 69.5,917.0 67.5,916.9 65.5,916.6 63.5,914.5 61.5,908.3 59.5,901.9 57.5,899.7 55.5,899.8 53.5,897.6 51.5,897.4 49.5,897.7 47.5,897.8 45.5,899.6 43.5,904.3 41.5,909.4 39.5,911.2 37.5,910.2 35.5,912.0 33.5,912.1 31.5,912.1 29.5,911.8 27.5,912.3 25.5,914.5 23.5,913.9 21.5,913.2 19.5,913.7 17.5,914.0 15.5,914.2 13.5,914.2 11.5,914.9 9.5,914.9 7.5,913.8 5.5,916.3 3.5,918.6 0.5,918.6" fill="#252525"/>
<polygon points="954.0,878.1 957.0,878.1 959.0,876.2 961.0,876.5 963.0,877.1 965.0,877.1 967.0,876.9 969.0,876.6 971.0,876.4 973.0,875.6 975.0,875.1 977.0,875.6 979.0,874.8 981.0,873.4 983.0,873.1 985.0,873.9 987.0,874.6 989.0,875.1 991.0,876.1 993.0,876.1 995.0,875.4 997.0,876.0 999.0,877.4 1001.0,878.5 1003.0,878.6 1005.0,877.8 1007.0,875.6 1009.0,873.9 1011.0,874.1 1013.0,874.8 1015.0,874.8 1017.0,874.6 1019.0,874.2 1021.0,874.1 1023.0,873.9 1025.0,874.6 1027.0,875.9 1029.0,876.5 1031.0,876.6 1033.0,877.1 1035.0,877.4 1037.0,877.0 1039.0,875.8 1041.0,876.4 1043.0,876.5 1045.0,875.4 1047.0,875.4 1049.0,875.3 1051.0,872.2 1053.0,871.0 1055.0,871.4 1057.0,872.9 1059.0,873.2 1061.0,874.1 1063.0,875.5 1065.0,875.8 1067.0,876.8 1069.0,879.6 1071.0,880.1 1073.0,880.0 1075.0,879.8 1077.0,879.8 1079.0,879.9 1081.0,879.7 1083.0,879.8 1085.0,880.0 1087.0,879.6 1089.0,880.1 1091.0,880.4 1093.0,880.0 1095.0,880.5 1097.0,880.9 1099.0,881.1 1101.0,880.8 1103.0,879.9 1105.0,880.1 1107.0,880.5 1109.0,879.5 1111.0,877.8 1113.0,874.3 1115.0,873.4 1117.0,871.8 1119.0,871.0 1121.0,871.5 1123.0,871.3 1125.0,870.6 1127.0,871.5 1129.0,873.7 1131.0,876.9 1133.0,877.1 1135.0,877.9 1137.0,878.2 1139.0,877.7 1141.0,878.2 1143.0,878.2 1145.0,877.8 1147.0,878.0 1149.0,878.2 1151.0,878.2 1153.0,878.0 1155.0,878.8 1157.0,878.6 1159.0,878.5 1161.0,878.6 1163.0,878.3 1165.0,877.3 1167.0,876.4 1169.0,876.8 1171.0,877.2 1173.0,876.7 1175.0,877.9 1177.0,878.1 1179.0,877.6 1181.0,878.4 1183.0,879.4 1185.0,880.1 1187.0,880.3 1189.0,880.9 1191.0,881.4 1193.0,880.7 1195.0,880.8 1197.0,881.6 1199.0,880.7 1201.0,879.7 1203.0,879.3 1205.0,878.9 1207.0,879.2 1209.0,879.4 1211.0,879.3 1213.0,879.0 1215.0,879.4 1217.0,880.9 1219.0,881.5 1221.0,881.9 1223.0,882.6 1225.0,882.5 1227.0,882.6 1229.0,882.5 1231.0,881.9 1233.0,881.2 1235.0,880.6 1237.0,881.0 1239.0,881.4 1241.0,881.6 1243.0,881.3 1245.0,880.1 1247.0,881.0 1249.0,881.2 1251.0,880.8 1253.0,880.3 1255.0,879.9 1257.0,879.4 1259.0,879.0 1261.0,879.2 1263.0,880.7 1265.0,880.4 1267.0,880.3 1269.0,880.5 1271.0,881.4 1273.0,881.8 1275.0,882.1 1277.0,882.3 1279.0,882.0 1281.0,881.6 1283.0,882.2 1285.0,883.0 1287.0,883.0 1289.0,882.2 1291.0,882.4 1293.0,882.6 1295.0,882.7 1297.0,883.1 1299.0,883.5 1301.0,882.5 1303.0,881.1 1305.0,881.7 1307.0,881.3 1309.0,879.1 1311.0,876.7 1313.0,875.9 1315.0,876.2 1317.0,876.0 1319.0,876.5 1321.0,877.7 1323.0,878.3 1325.0,879.6 1327.0,882.1 1329.0,884.4 1331.0,884.7 1333.0,882.7 1335.0,881.4 1337.0,881.0 1339.0,879.7 1341.0,877.7 1343.0,876.4 1345.0,875.8 1347.0,875.6 1349.0,876.3 1351.0,878.3 1353.0,879.6 1355.0,880.2 1357.0,882.0 1359.0,883.8 1361.0,884.4 1363.0,883.7 1365.0,882.4 1367.0,882.0 1369.0,881.3 1371.0,880.9 1373.0,881.2 1375.0,881.1 1377.0,880.8 1379.0,881.2 1381.0,882.4 1383.0,881.7 1385.0,880.6 1387.0,880.3 1389.0,880.3 1391.0,880.5 1393.0,880.6 1395.0,881.2 1397.0,881.5 1399.0,881.4 1401.0,882.7 1403.0,883.7 1405.0,884.6 1407.0,884.9 1409.0,884.4 1411.0,884.1 1413.0,884.1 1415.0,883.6 1417.0,883.6 1419.0,883.7 1421.0,883.7 1423.0,884.0 1425.0,884.5 1427.0,884.7 1429.0,884.3 1431.0,883.9 1433.0,884.2 1435.0,884.2 1437.0,884.5 1439.0,884.5 1441.0,883.7 1443.0,883.0 1445.0,883.4 1447.0,884.4 1449.0,883.5 1451.0,882.9 1453.0,883.0 1455.0,883.3 1457.0,884.0 1459.0,884.0 1461.0,883.7 1463.0,883.3 1465.0,882.9 1467.0,883.4 1469.0,883.1 1471.0,882.3 1473.0,881.8 1475.0,881.0 1477.0,881.0 1479.0,880.8 1482.0,880.8 1482.0,885.8 1479.0,885.8 1477.0,886.0 1475.0,886.0 1473.0,886.8 1471.0,887.3 1469.0,888.1 1467.0,888.4 1465.0,887.9 1463.0,888.3 1461.0,888.7 1459.0,889.0 1457.0,889.0 1455.0,888.3 1453.0,888.0 1451.0,887.9 1449.0,888.5 1447.0,889.4 1445.0,888.4 1443.0,888.0 1441.0,888.7 1439.0,889.5 1437.0,889.5 1435.0,889.2 1433.0,889.2 1431.0,888.9 1429.0,889.3 1427.0,889.7 1425.0,889.5 1423.0,889.0 1421.0,888.7 1419.0,888.7 1417.0,888.6 1415.0,888.6 1413.0,889.1 1411.0,889.1 1409.0,889.4 1407.0,889.9 1405.0,889.6 1403.0,888.7 1401.0,887.7 1399.0,886.4 1397.0,886.5 1395.0,886.2 1393.0,885.6 1391.0,885.5 1389.0,885.3 1387.0,885.3 1385.0,885.6 1383.0,886.7 1381.0,887.4 1379.0,886.2 1377.0,885.8 1375.0,886.1 1373.0,886.2 1371.0,885.9 1369.0,886.3 1367.0,887.0 1365.0,887.4 1363.0,888.7 1361.0,889.4 1359.0,888.8 1357.0,887.0 1355.0,885.2 1353.0,884.6 1351.0,883.3 1349.0,881.3 1347.0,880.6 1345.0,880.8 1343.0,881.4 1341.0,882.7 1339.0,884.7 1337.0,886.0 1335.0,886.4 1333.0,887.7 1331.0,889.7 1329.0,889.4 1327.0,887.1 1325.0,884.6 1323.0,883.3 1321.0,882.7 1319.0,881.5 1317.0,881.0 1315.0,881.2 1313.0,880.9 1311.0,881.7 1309.0,884.1 1307.0,886.3 1305.0,886.7 1303.0,886.1 1301.0,887.5 1299.0,888.5 1297.0,888.1 1295.0,887.7 1293.0,887.6 1291.0,887.4 1289.0,887.2 1287.0,888.0 1285.0,888.0 1283.0,887.2 1281.0,886.6 1279.0,887.0 1277.0,887.3 1275.0,887.1 1273.0,886.8 1271.0,886.4 1269.0,885.5 1267.0,885.3 1265.0,885.4 1263.0,885.7 1261.0,884.2 1259.0,884.0 1257.0,884.4 1255.0,884.9 1253.0,885.3 1251.0,885.8 1249.0,886.2 1247.0,886.0 1245.0,885.1 1243.0,886.3 1241.0,886.6 1239.0,886.4 1237.0,886.0 1235.0,885.6 1233.0,886.2 1231.0,886.9 1229.0,887.5 1227.0,887.6 1225.0,887.5 1223.0,887.6 1221.0,886.9 1219.0,886.5 1217.0,885.9 1215.0,884.4 1213.0,884.0 1211.0,884.3 1209.0,884.4 1207.0,884.2 1205.0,883.9 1203.0,884.3 1201.0,884.7 1199.0,885.7 1197.0,886.6 1195.0,885.8 1193.0,885.7 1191.0,886.4 1189.0,885.9 1187.0,885.3 1185.0,885.1 1183.0,884.4 1181.0,883.4 1179.0,882.6 1177.0,883.1 1175.0,882.9 1173.0,881.7 1171.0,882.2 1169.0,881.8 1167.0,881.4 1165.0,882.3 1163.0,883.3 1161.0,883.6 1159.0,883.5 1157.0,883.6 1155.0,883.8 1153.0,883.0 1151.0,883.2 1149.0,883.2 1147.0,883.0 1145.0,882.8 1143.0,883.2 1141.0,883.2 1139.0,882.7 1137.0,883.2 1135.0,882.9 1133.0,882.1 1131.0,881.9 1129.0,878.7 1127.0,876.5 1125.0,875.6 1123.0,876.3 1121.0,876.5 1119.0,876.0 1117.0,876.8 1115.0,878.4 1113.0,879.3 1111.0,882.8 1109.0,884.5 1107.0,885.5 1105.0,885.1 1103.0,884.9 1101.0,885.8 1099.0,886.1 1097.0,885.9 1095.0,885.5 1093.0,885.0 1091.0,885.4 1089.0,885.1 1087.0,884.6 1085.0,885.0 1083.0,884.8 1081.0,884.7 1079.0,884.9 1077.0,884.8 1075.0,884.8 1073.0,885.0 1071.0,885.1 1069.0,884.6 1067.0,881.8 1065.0,880.8 1063.0,880.5 1061.0,879.1 1059.0,878.2 1057.0,877.9 1055.0,876.4 1053.0,876.0 1051.0,877.2 1049.0,880.3 1047.0,880.4 1045.0,880.4 1043.0,881.5 1041.0,881.4 1039.0,880.8 1037.0,882.0 1035.0,882.4 1033.0,882.1 1031.0,881.6 1029.0,881.5 1027.0,880.9 1025.0,879.6 1023.0,878.9 1021.0,879.1 1019.0,879.2 1017.0,879.6 1015.0,879.8 1013.0,879.8 1011.0,879.1 1009.0,878.9 1007.0,880.6 1005.0,882.8 1003.0,883.6 1001.0,883.5 999.0,882.4 997.0,881.0 995.0,880.4 993.0,881.1 991.0,881.1 989.0,880.1 987.0,879.6 985.0,878.9 983.0,878.1 981.0,878.4 979.0,879.8 977.0,880.6 975.0,880.1 973.0,880.6 971.0,881.4 969.0,881.6 967.0,881.9 965.0,882.1 963.0,882.1 961.0,881.5 959.0,881.2 957.0,883.1 954.0,883.1" fill="#6b6b6b"/>
<polygon points="954.0,874.1 957.0,874.1 959.0,872.2 961.0,872.5 963.0,873.1 965.0,873.1 967.0,872.9 969.0,872.6 971.0,872.4 973.0,871.6 975.0,871.1 977.0,871.6 979.0,870.8 981.0,869.4 983.0,869.1 985.0,869.9 987.0,870.6 989.0,871.1 991.0,872.1 993.0,872.1 995.0,871.4 997.0,872.0 999.0,873.4 1001.0,874.5 1003.0,874.6 1005.0,873.8 1007.0,871.6 1009.0,869.9 1011.0,870.1 1013.0,870.8 1015.0,870.8 1017.0,870.6 1019.0,870.2 1021.0,870.1 1023.0,869.9 1025.0,870.6 1027.0,871.9 1029.0,872.5 1031.0,872.6 1033.0,873.1 1035.0,873.4 1037.0,873.0 1039.0,871.8 1041.0,872.4 1043.0,872.5 1045.0,871.4 1047.0,871.4 1049.0,871.3 1051.0,868.2 1053.0,867.0 1055.0,867.4 1057.0,868.9 1059.0,869.2 1061.0,870.1 1063.0,871.5 1065.0,871.8 1067.0,872.8 1069.0,875.6 1071.0,876.1 1073.0,876.0 1075.0,875.8 1077.0,875.8 1079.0,875.9 1081.0,875.7 1083.0,875.8 1085.0,876.0 1087.0,875.6 1089.0,876.1 1091.0,876.4 1093.0,876.0 1095.0,876.5 1097.0,876.9 1099.0,877.1 1101.0,876.8 1103.0,875.9 1105.0,876.1 1107.0,876.5 1109.0,875.5 1111.0,873.8 1113.0,870.3 1115.0,869.4 1117.0,867.8 1119.0,867.0 1121.0,867.5 1123.0,867.3 1125.0,866.6 1127.0,867.5 1129.0,869.7 1131.0,872.9 1133.0,873.1 1135.0,873.9 1137.0,874.2 1139.0,873.7 1141.0,874.2 1143.0,874.2 1145.0,873.8 1147.0,874.0 1149.0,874.2 1151.0,874.2 1153.0,874.0 1155.0,874.8 1157.0,874.6 1159.0,874.5 1161.0,874.6 1163.0,874.3 1165.0,873.3 1167.0,872.4 1169.0,872.8 1171.0,873.2 1173.0,872.7 1175.0,873.9 1177.0,874.1 1179.0,873.6 1181.0,874.4 1183.0,875.4 1185.0,876.1 1187.0,876.3 1189.0,876.9 1191.0,877.4 1193.0,876.7 1195.0,876.8 1197.0,877.6 1199.0,876.7 1201.0,875.7 1203.0,875.3 1205.0,874.9 1207.0,875.2 1209.0,875.4 1211.0,875.3 1213.0,875.0 1215.0,875.4 1217.0,876.9 1219.0,877.5 1221.0,877.9 1223.0,878.6 1225.0,878.5 1227.0,878.6 1229.0,878.5 1231.0,877.9 1233.0,877.2 1235.0,876.6 1237.0,877.0 1239.0,877.4 1241.0,877.6 1243.0,877.3 1245.0,876.1 1247.0,877.0 1249.0,877.2 1251.0,876.8 1253.0,876.3 1255.0,875.9 1257.0,875.4 1259.0,875.0 1261.0,875.2 1263.0,876.7 1265.0,876.4 1267.0,876.3 1269.0,876.5 1271.0,877.4 1273.0,877.8 1275.0,878.1 1277.0,878.3 1279.0,878.0 1281.0,877.6 1283.0,878.2 1285.0,879.0 1287.0,879.0 1289.0,878.2 1291.0,878.4 1293.0,878.6 1295.0,878.7 1297.0,879.1 1299.0,879.5 1301.0,878.5 1303.0,877.1 1305.0,877.7 1307.0,877.3 1309.0,875.1 1311.0,872.7 1313.0,871.9 1315.0,872.2 1317.0,872.0 1319.0,872.5 1321.0,873.7 1323.0,874.3 1325.0,875.6 1327.0,878.1 1329.0,880.4 1331.0,880.7 1333.0,878.7 1335.0,877.4 1337.0,877.0 1339.0,875.7 1341.0,873.7 1343.0,872.4 1345.0,871.8 1347.0,871.6 1349.0,872.3 1351.0,874.3 1353.0,875.6 1355.0,876.2 1357.0,878.0 1359.0,879.8 1361.0,880.4 1363.0,879.7 1365.0,878.4 1367.0,878.0 1369.0,877.3 1371.0,876.9 1373.0,877.2 1375.0,877.1 1377.0,876.8 1379.0,877.2 1381.0,878.4 1383.0,877.7 1385.0,876.6 1387.0,876.3 1389.0,876.3 1391.0,876.5 1393.0,876.6 1395.0,877.2 1397.0,877.5 1399.0,877.4 1401.0,878.7 1403.0,879.7 1405.0,880.6 1407.0,880.9 1409.0,880.4 1411.0,880.1 1413.0,880.1 1415.0,879.6 1417.0,879.6 1419.0,879.7 1421.0,879.7 1423.0,880.0 1425.0,880.5 1427.0,880.7 1429.0,880.3 1431.0,879.9 1433.0,880.2 1435.0,880.2 1437.0,880.5 1439.0,880.5 1441.0,879.7 1443.0,879.0 1445.0,879.4 1447.0,880.4 1449.0,879.5 1451.0,878.9 1453.0,879.0 1455.0,879.3 1457.0,880.0 1459.0,880.0 1461.0,879.7 1463.0,879.3 1465.0,878.9 1467.0,879.4 1469.0,879.1 1471.0,878.3 1473.0,877.8 1475.0,877.0 1477.0,877.0 1479.0,876.8 1482.0,876.8 1482.0,880.8 1479.0,880.8 1477.0,881.0 1475.0,881.0 1473.0,881.8 1471.0,882.3 1469.0,883.1 1467.0,883.4 1465.0,882.9 1463.0,883.3 1461.0,883.7 1459.0,884.0 1457.0,884.0 1455.0,883.3 1453.0,883.0 1451.0,882.9 1449.0,883.5 1447.0,884.4 1445.0,883.4 1443.0,883.0 1441.0,883.7 1439.0,884.5 1437.0,884.5 1435.0,884.2 1433.0,884.2 1431.0,883.9 1429.0,884.3 1427.0,884.7 1425.0,884.5 1423.0,884.0 1421.0,883.7 1419.0,883.7 1417.0,883.6 1415.0,883.6 1413.0,884.1 1411.0,884.1 1409.0,884.4 1407.0,884.9 1405.0,884.6 1403.0,883.7 1401.0,882.7 1399.0,881.4 1397.0,881.5 1395.0,881.2 1393.0,880.6 1391.0,880.5 1389.0,880.3 1387.0,880.3 1385.0,880.6 1383.0,881.7 1381.0,882.4 1379.0,881.2 1377.0,880.8 1375.0,881.1 1373.0,881.2 1371.0,880.9 1369.0,881.3 1367.0,882.0 1365.0,882.4 1363.0,883.7 1361.0,884.4 1359.0,883.8 1357.0,882.0 1355.0,880.2 1353.0,879.6 1351.0,878.3 1349.0,876.3 1347.0,875.6 1345.0,875.8 1343.0,876.4 1341.0,877.7 1339.0,879.7 1337.0,881.0 1335.0,881.4 1333.0,882.7 1331.0,884.7 1329.0,884.4 1327.0,882.1 1325.0,879.6 1323.0,878.3 1321.0,877.7 1319.0,876.5 1317.0,876.0 1315.0,876.2 1313.0,875.9 1311.0,876.7 1309.0,879.1 1307.0,881.3 1305.0,881.7 1303.0,881.1 1301.0,882.5 1299.0,883.5 1297.0,883.1 1295.0,882.7 1293.0,882.6 1291.0,882.4 1289.0,882.2 1287.0,883.0 1285.0,883.0 1283.0,882.2 1281.0,881.6 1279.0,882.0 1277.0,882.3 1275.0,882.1 1273.0,881.8 1271.0,881.4 1269.0,880.5 1267.0,880.3 1265.0,880.4 1263.0,880.7 1261.0,879.2 1259.0,879.0 1257.0,879.4 1255.0,879.9 1253.0,880.3 1251.0,880.8 1249.0,881.2 1247.0,881.0 1245.0,880.1 1243.0,881.3 1241.0,881.6 1239.0,881.4 1237.0,881.0 1235.0,880.6 1233.0,881.2 1231.0,881.9 1229.0,882.5 1227.0,882.6 1225.0,882.5 1223.0,882.6 1221.0,881.9 1219.0,881.5 1217.0,880.9 1215.0,879.4 1213.0,879.0 1211.0,879.3 1209.0,879.4 1207.0,879.2 1205.0,878.9 1203.0,879.3 1201.0,879.7 1199.0,880.7 1197.0,881.6 1195.0,880.8 1193.0,880.7 1191.0,881.4 1189.0,880.9 1187.0,880.3 1185.0,880.1 1183.0,879.4 1181.0,878.4 1179.0,877.6 1177.0,878.1 1175.0,877.9 1173.0,876.7 1171.0,877.2 1169.0,876.8 1167.0,876.4 1165.0,877.3 1163.0,878.3 1161.0,878.6 1159.0,878.5 1157.0,878.6 1155.0,878.8 1153.0,878.0 1151.0,878.2 1149.0,878.2 1147.0,878.0 1145.0,877.8 1143.0,878.2 1141.0,878.2 1139.0,877.7 1137.0,878.2 1135.0,877.9 1133.0,877.1 1131.0,876.9 1129.0,873.7 1127.0,871.5 1125.0,870.6 1123.0,871.3 1121.0,871.5 1119.0,871.0 1117.0,871.8 1115.0,873.4 1113.0,874.3 1111.0,877.8 1109.0,879.5 1107.0,880.5 1105.0,880.1 1103.0,879.9 1101.0,880.8 1099.0,881.1 1097.0,880.9 1095.0,880.5 1093.0,880.0 1091.0,880.4 1089.0,880.1 1087.0,879.6 1085.0,880.0 1083.0,879.8 1081.0,879.7 1079.0,879.9 1077.0,879.8 1075.0,879.8 1073.0,880.0 1071.0,880.1 1069.0,879.6 1067.0,876.8 1065.0,875.8 1063.0,875.5 1061.0,874.1 1059.0,873.2 1057.0,872.9 1055.0,871.4 1053.0,871.0 1051.0,872.2 1049.0,875.3 1047.0,875.4 1045.0,875.4 1043.0,876.5 1041.0,876.4 1039.0,875.8 1037.0,877.0 1035.0,877.4 1033.0,877.1 1031.0,876.6 1029.0,876.5 1027.0,875.9 1025.0,874.6 1023.0,873.9 1021.0,874.1 1019.0,874.2 1017.0,874.6 1015.0,874.8 1013.0,874.8 1011.0,874.1 1009.0,873.9 1007.0,875.6 1005.0,877.8 1003.0,878.6 1001.0,878.5 999.0,877.4 997.0,876.0 995.0,875.4 993.0,876.1 991.0,876.1 989.0,875.1 987.0,874.6 985.0,873.9 983.0,873.1 981.0,873.4 979.0,874.8 977.0,875.6 975.0,875.1 973.0,875.6 971.0,876.4 969.0,876.6 967.0,876.9 965.0,877.1 963.0,877.1 961.0,876.5 959.0,876.2 957.0,878.1 954.0,878.1" fill="#4c4c4c"/>
<polygon points="954.0,712.1 957.0,712.1 959.0,710.2 961.0,710.5 963.0,711.1 965.0,711.1 967.0,710.9 969.0,710.6 971.0,710.4 973.0,709.6 975.0,709.1 977.0,709.6 979.0,708.8 981.0,707.4 983.0,707.1 985.0,707.9 987.0,708.6 989.0,709.1 991.0,710.1 993.0,710.1 995.0,709.4 997.0,710.0 999.0,711.4 1001.0,712.5 1003.0,712.6 1005.0,711.8 1007.0,709.6 1009.0,707.9 1011.0,708.1 1013.0,708.8 1015.0,708.8 1017.0,708.6 1019.0,708.2 1021.0,708.1 1023.0,707.9 1025.0,708.6 1027.0,709.9 1029.0,710.5 1031.0,710.6 1033.0,711.1 1035.0,711.4 1037.0,711.0 1039.0,709.8 1041.0,710.4 1043.0,710.5 1045.0,709.4 1047.0,709.4 1049.0,709.3 1051.0,706.2 1053.0,705.0 1055.0,705.4 1057.0,706.9 1059.0,707.2 1061.0,708.1 1063.0,709.5 1065.0,709.8 1067.0,710.8 1069.0,713.6 1071.0,714.1 1073.0,714.0 1075.0,713.8 1077.0,713.8 1079.0,713.9 1081.0,713.7 1083.0,713.8 1085.0,714.0 1087.0,713.6 1089.0,714.1 1091.0,714.4 1093.0,714.0 1095.0,714.5 1097.0,714.9 1099.0,715.1 1101.0,714.8 1103.0,713.9 1105.0,714.1 1107.0,714.5 1109.0,713.5 1111.0,711.8 1113.0,708.3 1115.0,707.4 1117.0,705.8 1119.0,705.0 1121.0,705.5 1123.0,705.3 1125.0,704.6 1127.0,705.5 1129.0,707.7 1131.0,710.9 1133.0,711.1 1135.0,711.9 1137.0,712.2 1139.0,711.7 1141.0,712.2 1143.0,712.2 1145.0,711.8 1147.0,712.0 1149.0,712.2 1151.0,712.2 1153.0,712.0 1155.0,712.8 1157.0,712.6 1159.0,712.5 1161.0,712.6 1163.0,712.3 1165.0,711.3 1167.0,710.4 1169.0,710.8 1171.0,711.2 1173.0,710.7 1175.0,711.9 1177.0,712.1 1179.0,711.6 1181.0,712.4 1183.0,713.4 1185.0,714.1 1187.0,714.3 1189.0,714.9 1191.0,715.4 1193.0,714.7 1195.0,714.8 1197.0,715.6 1199.0,714.7 1201.0,713.7 1203.0,713.3 1205.0,712.9 1207.0,713.2 1209.0,713.4 1211.0,713.3 1213.0,713.0 1215.0,713.4 1217.0,714.9 1219.0,715.5 1221.0,715.9 1223.0,716.6 1225.0,716.5 1227.0,716.6 1229.0,716.5 1231.0,715.9 1233.0,715.2 1235.0,714.6 1237.0,715.0 1239.0,715.4 1241.0,715.6 1243.0,715.3 1245.0,714.1 1247.0,715.0 1249.0,715.2 1251.0,714.8 1253.0,714.3 1255.0,713.9 1257.0,713.4 1259.0,713.0 1261.0,713.2 1263.0,714.7 1265.0,714.4 1267.0,714.3 1269.0,714.5 1271.0,715.4 1273.0,715.8 1275.0,716.1 1277.0,716.3 1279.0,716.0 1281.0,715.6 1283.0,716.2 1285.0,717.0 1287.0,717.0 1289.0,716.2 1291.0,716.4 1293.0,716.6 1295.0,716.7 1297.0,717.1 1299.0,717.5 1301.0,716.5 1303.0,715.1 1305.0,715.7 1307.0,715.3 1309.0,713.1 1311.0,710.7 1313.0,709.9 1315.0,710.2 1317.0,710.0 1319.0,710.5 1321.0,711.7 1323.0,712.3 1325.0,713.6 1327.0,716.1 1329.0,718.4 1331.0,718.7 1333.0,716.7 1335.0,715.4 1337.0,715.0 1339.0,713.7 1341.0,711.7 1343.0,710.4 1345.0,709.8 1347.0,709.6 1349.0,710.3 1351.0,712.3 1353.0,713.6 1355.0,714.2 1357.0,716.0 1359.0,717.8 1361.0,718.4 1363.0,717.7 1365.0,716.4 1367.0,716.0 1369.0,715.3 1371.0,714.9 1373.0,715.2 1375.0,715.1 1377.0,714.8 1379.0,715.2 1381.0,716.4 1383.0,715.7 1385.0,714.6 1387.0,714.3 1389.0,714.3 1391.0,714.5 1393.0,714.6 1395.0,715.2 1397.0,715.5 1399.0,715.4 1401.0,716.7 1403.0,717.7 1405.0,718.6 1407.0,718.9 1409.0,718.4 1411.0,718.1 1413.0,718.1 1415.0,717.6 1417.0,717.6 1419.0,717.7 1421.0,717.7 1423.0,718.0 1425.0,718.5 1427.0,718.7 1429.0,718.3 1431.0,717.9 1433.0,718.2 1435.0,718.2 1437.0,718.5 1439.0,718.5 1441.0,717.7 1443.0,717.0 1445.0,717.4 1447.0,718.4 1449.0,717.5 1451.0,716.9 1453.0,717.0 1455.0,717.3 1457.0,718.0 1459.0,718.0 1461.0,717.7 1463.0,717.3 1465.0,716.9 1467.0,717.4 1469.0,717.1 1471.0,716.3 1473.0,715.8 1475.0,715.0 1477.0,715.0 1479.0,714.8 1482.0,714.8 1482.0,876.8 1479.0,876.8 1477.0,877.0 1475.0,877.0 1473.0,877.8 1471.0,878.3 1469.0,879.1 1467.0,879.4 1465.0,878.9 1463.0,879.3 1461.0,879.7 1459.0,880.0 1457.0,880.0 1455.0,879.3 1453.0,879.0 1451.0,878.9 1449.0,879.5 1447.0,880.4 1445.0,879.4 1443.0,879.0 1441.0,879.7 1439.0,880.5 1437.0,880.5 1435.0,880.2 1433.0,880.2 1431.0,879.9 1429.0,880.3 1427.0,880.7 1425.0,880.5 1423.0,880.0 1421.0,879.7 1419.0,879.7 1417.0,879.6 1415.0,879.6 1413.0,880.1 1411.0,880.1 1409.0,880.4 1407.0,880.9 1405.0,880.6 1403.0,879.7 1401.0,878.7 1399.0,877.4 1397.0,877.5 1395.0,877.2 1393.0,876.6 1391.0,876.5 1389.0,876.3 1387.0,876.3 1385.0,876.6 1383.0,877.7 1381.0,878.4 1379.0,877.2 1377.0,876.8 1375.0,877.1 1373.0,877.2 1371.0,876.9 1369.0,877.3 1367.0,878.0 1365.0,878.4 1363.0,879.7 1361.0,880.4 1359.0,879.8 1357.0,878.0 1355.0,876.2 1353.0,875.6 1351.0,874.3 1349.0,872.3 1347.0,871.6 1345.0,871.8 1343.0,872.4 1341.0,873.7 1339.0,875.7 1337.0,877.0 1335.0,877.4 1333.0,878.7 1331.0,880.7 1329.0,880.4 1327.0,878.1 1325.0,875.6 1323.0,874.3 1321.0,873.7 1319.0,872.5 1317.0,872.0 1315.0,872.2 1313.0,871.9 1311.0,872.7 1309.0,875.1 1307.0,877.3 1305.0,877.7 1303.0,877.1 1301.0,878.5 1299.0,879.5 1297.0,879.1 1295.0,878.7 1293.0,878.6 1291.0,878.4 1289.0,878.2 1287.0,879.0 1285.0,879.0 1283.0,878.2 1281.0,877.6 1279.0,878.0 1277.0,878.3 1275.0,878.1 1273.0,877.8 1271.0,877.4 1269.0,876.5 1267.0,876.3 1265.0,876.4 1263.0,876.7 1261.0,875.2 1259.0,875.0 1257.0,875.4 1255.0,875.9 1253.0,876.3 1251.0,876.8 1249.0,877.2 1247.0,877.0 1245.0,876.1 1243.0,877.3 1241.0,877.6 1239.0,877.4 1237.0,877.0 1235.0,876.6 1233.0,877.2 1231.0,877.9 1229.0,878.5 1227.0,878.6 1225.0,878.5 1223.0,878.6 1221.0,877.9 1219.0,877.5 1217.0,876.9 1215.0,875.4 1213.0,875.0 1211.0,875.3 1209.0,875.4 1207.0,875.2 1205.0,874.9 1203.0,875.3 1201.0,875.7 1199.0,876.7 1197.0,877.6 1195.0,876.8 1193.0,876.7 1191.0,877.4 1189.0,876.9 1187.0,876.3 1185.0,876.1 1183.0,875.4 1181.0,874.4 1179.0,873.6 1177.0,874.1 1175.0,873.9 1173.0,872.7 1171.0,873.2 1169.0,872.8 1167.0,872.4 1165.0,873.3 1163.0,874.3 1161.0,874.6 1159.0,874.5 1157.0,874.6 1155.0,874.8 1153.0,874.0 1151.0,874.2 1149.0,874.2 1147.0,874.0 1145.0,873.8 1143.0,874.2 1141.0,874.2 1139.0,873.7 1137.0,874.2 1135.0,873.9 1133.0,873.1 1131.0,872.9 1129.0,869.7 1127.0,867.5 1125.0,866.6 1123.0,867.3 1121.0,867.5 1119.0,867.0 1117.0,867.8 1115.0,869.4 1113.0,870.3 1111.0,873.8 1109.0,875.5 1107.0,876.5 1105.0,876.1 1103.0,875.9 1101.0,876.8 1099.0,877.1 1097.0,876.9 1095.0,876.5 1093.0,876.0 1091.0,876.4 1089.0,876.1 1087.0,875.6 1085.0,876.0 1083.0,875.8 1081.0,875.7 1079.0,875.9 1077.0,875.8 1075.0,875.8 1073.0,876.0 1071.0,876.1 1069.0,875.6 1067.0,872.8 1065.0,871.8 1063.0,871.5 1061.0,870.1 1059.0,869.2 1057.0,868.9 1055.0,867.4 1053.0,867.0 1051.0,868.2 1049.0,871.3 1047.0,871.4 1045.0,871.4 1043.0,872.5 1041.0,872.4 1039.0,871.8 1037.0,873.0 1035.0,873.4 1033.0,873.1 1031.0,872.6 1029.0,872.5 1027.0,871.9 1025.0,870.6 1023.0,869.9 1021.0,870.1 1019.0,870.2 1017.0,870.6 1015.0,870.8 1013.0,870.8 1011.0,870.1 1009.0,869.9 1007.0,871.6 1005.0,873.8 1003.0,874.6 1001.0,874.5 999.0,873.4 997.0,872.0 995.0,871.4 993.0,872.1 991.0,872.1 989.0,871.1 987.0,870.6 985.0,869.9 983.0,869.1 981.0,869.4 979.0,870.8 977.0,871.6 975.0,871.1 973.0,871.6 971.0,872.4 969.0,872.6 967.0,872.9 965.0,873.1 963.0,873.1 961.0,872.5 959.0,872.2 957.0,874.1 954.0,874.1" fill="#252525"/>
<polygon points="586.0,684.8 589.0,684.8 591.0,685.8 593.0,689.0 595.0,690.3 597.0,690.9 599.0,689.8 601.0,691.8 603.0,695.1 605.0,699.1 607.0,704.7 609.0,709.4 611.0,712.3 613.0,715.7 615.0,719.2 617.0,722.7 619.0,726.3 621.0,729.0 623.0,730.0 625.0,730.7 627.0,731.3 629.0,731.1 631.0,731.6 633.0,732.7 635.0,733.5 637.0,732.9 639.0,730.2 641.0,726.5 643.0,721.1 645.0,716.6 647.0,713.5 649.0,709.2 651.0,704.9 653.0,701.8 655.0,699.9 657.0,700.7 659.0,704.2 661.0,709.2 663.0,712.0 665.0,713.3 667.0,715.1 669.0,717.0 671.0,717.8 673.0,717.9 675.0,718.5 677.0,717.9 679.0,717.0 681.0,717.2 683.0,717.7 685.0,718.5 687.0,718.6 689.0,718.8 691.0,719.0 693.0,719.0 695.0,719.9 697.0,720.0 699.0,719.0 701.0,718.2 703.0,718.6 705.0,719.9 707.0,722.3 709.0,725.4 711.0,728.3 713.0,728.4 715.0,729.5 717.0,732.0 719.0,735.3 722.0,735.3 722.0,743.3 719.0,743.3 717.0,740.0 715.0,737.5 713.0,736.4 711.0,736.3 709.0,733.4 707.0,730.3 705.0,727.9 703.0,726.6 701.0,726.2 699.0,727.0 697.0,728.0 695.0,727.9 693.0,727.0 691.0,727.0 689.0,726.8 687.0,726.6 685.0,726.5 683.0,725.7 681.0,725.2 679.0,725.0 677.0,725.9 675.0,726.5 673.0,725.9 671.0,725.8 669.0,725.0 667.0,723.1 665.0,721.3 663.0,720.0 661.0,717.2 659.0,712.2 657.0,708.7 655.0,707.9 653.0,709.8 651.0,712.9 649.0,717.2 647.0,721.5 645.0,724.6 643.0,729.1 641.0,734.5 639.0,738.2 637.0,740.9 635.0,741.5 633.0,740.7 631.0,739.6 629.0,739.1 627.0,739.3 625.0,738.7 623.0,738.0 621.0,737.0 619.0,734.3 617.0,730.7 615.0,727.2 613.0,723.7 611.0,720.3 609.0,717.4 607.0,712.7 605.0,707.1 603.0,703.1 601.0,699.8 599.0,697.8 597.0,698.9 595.0,698.3 593.0,697.0 591.0,693.8 589.0,692.8 586.0,692.8" fill="#6b6b6b"/>
<polygon points="586.0,676.8 589.0,676.8 591.0,677.8 593.0,681.0 595.0,682.3 597.0,682.9 599.0,681.8 601.0,683.8 603.0,687.1 605.0,691.1 607.0,696.7 609.0,701.4 611.0,704.3 613.0,707.7 615.0,711.2 617.0,714.7 619.0,718.3 621.0,721.0 623.0,722.0 625.0,722.7 627.0,723.3 629.0,723.1 631.0,723.6 633.0,724.7 635.0,725.5 637.0,724.9 639.0,722.2 641.0,718.5 643.0,713.1 645.0,708.6 647.0,705.5 649.0,701.2 651.0,696.9 653.0,693.8 655.0,691.9 657.0,692.7 659.0,696.2 661.0,701.2 663.0,704.0 665.0,705.3 667.0,707.1 669.0,709.0 671.0,709.8 673.0,709.9 675.0,710.5 677.0,709.9 679.0,709.0 681.0,709.2 683.0,709.7 685.0,710.5 687.0,710.6 689.0,710.8 691.0,711.0 693.0,711.0 695.0,711.9 697.0,712.0 699.0,711.0 701.0,710.2 703.0,710.6 705.0,711.9 707.0,714.3 709.0,717.4 711.0,720.3 713.0,720.4 715.0,721.5 717.0,724.0 719.0,727.3 722.0,727.3 722.0,735.3 719.0,735.3 717.0,732.0 715.0,729.5 713.0,728.4 711.0,728.3 709.0,725.4 707.0,722.3 705.0,719.9 703.0,718.6 701.0,718.2 699.0,719.0 697.0,720.0 695.0,719.9 693.0,719.0 691.0,719.0 689.0,718.8 687.0,718.6 685.0,718.5 683.0,717.7 681.0,717.2 679.0,717.0 677.0,717.9 675.0,718.5 673.0,717.9 671.0,717.8 669.0,717.0 667.0,715.1 665.0,713.3 663.0,712.0 661.0,709.2 659.0,704.2 657.0,700.7 655.0,699.9 653.0,701.8 651.0,704.9 649.0,709.2 647.0,713.5 645.0,716.6 643.0,721.1 641.0,726.5 639.0,730.2 637.0,732.9 635.0,733.5 633.0,732.7 631.0,731.6 629.0,731.1 627.0,731.3 625.0,730.7 623.0,730.0 621.0,729.0 619.0,726.3 617.0,722.7 615.0,719.2 613.0,715.7 611.0,712.3 609.0,709.4 607.0,704.7 605.0,699.1 603.0,695.1 601.0,691.8 599.0,689.8 597.0,690.9 595.0,690.3 593.0,689.0 591.0,685.8 589.0,684.8 586.0,684.8" fill="#4c4c4c"/>
<polygon points="586.0,501.8 589.0,501.8 591.0,502.8 593.0,506.0 595.0,507.3 597.0,507.9 599.0,506.8 601.0,508.8 603.0,512.1 605.0,516.1 607.0,521.7 609.0,526.4 611.0,529.3 613.0,532.7 615.0,536.2 617.0,539.7 619.0,543.3 621.0,546.0 623.0,547.0 625.0,547.7 627.0,548.3 629.0,548.1 631.0,548.6 633.0,549.7 635.0,550.5 637.0,549.9 639.0,547.2 641.0,543.5 643.0,538.1 645.0,533.6 647.0,530.5 649.0,526.2 651.0,521.9 653.0,518.8 655.0,516.9 657.0,517.7 659.0,521.2 661.0,526.2 663.0,529.0 665.0,530.3 667.0,532.1 669.0,534.0 671.0,534.8 673.0,534.9 675.0,535.5 677.0,534.9 679.0,534.0 681.0,534.2 683.0,534.7 685.0,535.5 687.0,535.6 689.0,535.8 691.0,536.0 693.0,536.0 695.0,536.9 697.0,537.0 699.0,536.0 701.0,535.2 703.0,535.6 705.0,536.9 707.0,539.3 709.0,542.4 711.0,545.3 713.0,545.4 715.0,546.5 717.0,549.0 719.0,552.3 722.0,552.3 722.0,727.3 719.0,727.3 717.0,724.0 715.0,721.5 713.0,720.4 711.0,720.3 709.0,717.4 707.0,714.3 705.0,711.9 703.0,710.6 701.0,710.2 699.0,711.0 697.0,712.0 695.0,711.9 693.0,711.0 691.0,711.0 689.0,710.8 687.0,710.6 685.0,710.5 683.0,709.7 681.0,709.2 679.0,709.0 677.0,709.9 675.0,710.5 673.0,709.9 671.0,709.8 669.0,709.0 667.0,707.1 665.0,705.3 663.0,704.0 661.0,701.2 659.0,696.2 657.0,692.7 655.0,691.9 653.0,693.8 651.0,696.9 649.0,701.2 647.0,705.5 645.0,708.6 643.0,713.1 641.0,718.5 639.0,722.2 637.0,724.9 635.0,725.5 633.0,724.7 631.0,723.6 629.0,723.1 627.0,723.3 625.0,722.7 623.0,722.0 621.0,721.0 619.0,718.3 617.0,714.7 615.0,711.2 613.0,707.7 611.0,704.3 609.0,701.4 607.0,696.7 605.0,691.1 603.0,687.1 601.0,683.8 599.0,681.8 597.0,682.9 595.0,682.3 593.0,681.0 591.0,677.8 589.0,676.8 586.0,676.8" fill="#252525"/>
<polygon points="814.0,629.9 817.0,629.9 819.0,630.2 821.0,631.1 823.0,631.4 825.0,632.0 827.0,633.7 829.0,635.7 831.0,637.6 833.0,637.1 835.0,636.6 837.0,636.5 839.0,636.9 841.0,638.9 843.0,641.6 845.0,643.5 847.0,644.8 849.0,648.1 851.0,651.8 853.0,657.2 855.0,662.1 857.0,665.5 859.0,667.9 861.0,669.0 863.0,670.1 865.0,670.7 867.0,668.6 869.0,664.2 871.0,656.1 873.0,648.9 875.0,643.5 877.0,636.1 879.0,627.8 881.0,620.1 883.0,615.5 885.0,618.0 887.0,625.1 889.0,635.6 891.0,644.9 893.0,652.4 895.0,660.5 897.0,668.0 899.0,675.9 901.0,682.7 903.0,684.3 905.0,681.1 907.0,674.5 909.0,667.7 911.0,660.6 913.0,655.6 915.0,651.6 917.0,645.1 919.0,638.8 921.0,631.6 923.0,627.9 925.0,626.1 927.0,626.1 929.0,626.5 931.0,624.9 933.0,623.8 935.0,623.9 937.0,623.7 939.0,623.7 941.0,623.8 943.0,624.1 945.0,623.1 947.0,621.8 949.0,622.3 952.0,622.3 952.0,630.3 949.0,630.3 947.0,629.8 945.0,631.1 943.0,632.1 941.0,631.8 939.0,631.7 937.0,631.7 935.0,631.9 933.0,631.8 931.0,632.9 929.0,634.5 927.0,634.1 925.0,634.1 923.0,635.9 921.0,639.6 919.0,646.8 917.0,653.1 915.0,659.6 913.0,663.6 911.0,668.6 909.0,675.7 907.0,682.5 905.0,689.1 903.0,692.3 901.0,690.7 899.0,683.9 897.0,676.0 895.0,668.5 893.0,660.4 891.0,652.9 889.0,643.6 887.0,633.1 885.0,626.0 883.0,623.5 881.0,628.1 879.0,635.8 877.0,644.1 875.0,651.5 873.0,656.9 871.0,664.1 869.0,672.2 867.0,676.6 865.0,678.7 863.0,678.1 861.0,677.0 859.0,675.9 857.0,673.5 855.0,670.1 853.0,665.2 851.0,659.8 849.0,656.1 847.0,652.8 845.0,651.5 843.0,649.6 841.0,646.9 839.0,644.9 837.0,644.5 835.0,644.6 833.0,645.1 831.0,645.6 829.0,643.7 827.0,641.7 825.0,640.0 823.0,639.4 821.0,639.1 819.0,638.2 817.0,637.9 814.0,637.9" fill="#6b6b6b"/>
<polygon points="814.0,621.9 817.0,621.9 819.0,622.2 821.0,623.1 823.0,623.4 825.0,624.0 827.0,625.7 829.0,627.7 831.0,629.6 833.0,629.1 835.0,628.6 837.0,628.5 839.0,628.9 841.0,630.9 843.0,633.6 845.0,635.5 847.0,636.8 849.0,640.1 851.0,643.8 853.0,649.2 855.0,654.1 857.0,657.5 859.0,659.9 861.0,661.0 863.0,662.1 865.0,662.7 867.0,660.6 869.0,656.2 871.0,648.1 873.0,640.9 875.0,635.5 877.0,628.1 879.0,619.8 881.0,612.1 883.0,607.5 885.0,610.0 887.0,617.1 889.0,627.6 891.0,636.9 893.0,644.4 895.0,652.5 897.0,660.0 899.0,667.9 901.0,674.7 903.0,676.3 905.0,673.1 907.0,666.5 909.0,659.7 911.0,652.6 913.0,647.6 915.0,643.6 917.0,637.1 919.0,630.8 921.0,623.6 923.0,619.9 925.0,618.1 927.0,618.1 929.0,618.5 931.0,616.9 933.0,615.8 935.0,615.9 937.0,615.7 939.0,615.7 941.0,615.8 943.0,616.1 945.0,615.1 947.0,613.8 949.0,614.3 952.0,614.3 952.0,622.3 949.0,622.3 947.0,621.8 945.0,623.1 943.0,624.1 941.0,623.8 939.0,623.7 937.0,623.7 935.0,623.9 933.0,623.8 931.0,624.9 929.0,626.5 927.0,626.1 925.0,626.1 923.0,627.9 921.0,631.6 919.0,638.8 917.0,645.1 915.0,651.6 913.0,655.6 911.0,660.6 909.0,667.7 907.0,674.5 905.0,681.1 903.0,684.3 901.0,682.7 899.0,675.9 897.0,668.0 895.0,660.5 893.0,652.4 891.0,644.9 889.0,635.6 887.0,625.1 885.0,618.0 883.0,615.5 881.0,620.1 879.0,627.8 877.0,636.1 875.0,643.5 873.0,648.9 871.0,656.1 869.0,664.2 867.0,668.6 865.0,670.7 863.0,670.1 861.0,669.0 859.0,667.9 857.0,665.5 855.0,662.1 853.0,657.2 851.0,651.8 849.0,648.1 847.0,644.8 845.0,643.5 843.0,641.6 841.0,638.9 839.0,636.9 837.0,636.5 835.0,636.6 833.0,637.1 831.0,637.6 829.0,635.7 827.0,633.7 825.0,632.0 823.0,631.4 821.0,631.1 819.0,630.2 817.0,629.9 814.0,629.9" fill="#4c4c4c"/>
<polygon points="814.0,446.9 817.0,446.9 819.0,447.2 821.0,448.1 823.0,448.4 825.0,449.0 827.0,450.7 829.0,452.7 831.0,454.6 833.0,454.1 835.0,453.6 837.0,453.5 839.0,453.9 841.0,455.9 843.0,458.6 845.0,460.5 847.0,461.8 849.0,465.1 851.0,468.8 853.0,474.2 855.0,479.1 857.0,482.5 859.0,484.9 861.0,486.0 863.0,487.1 865.0,487.7 867.0,485.6 869.0,481.2 871.0,473.1 873.0,465.9 875.0,460.5 877.0,453.1 879.0,444.8 881.0,437.1 883.0,432.5 885.0,435.0 887.0,442.1 889.0,452.6 891.0,461.9 893.0,469.4 895.0,477.5 897.0,485.0 899.0,492.9 901.0,499.7 903.0,501.3 905.0,498.1 907.0,491.5 909.0,484.7 911.0,477.6 913.0,472.6 915.0,468.6 917.0,462.1 919.0,455.8 921.0,448.6 923.0,444.9 925.0,443.1 927.0,443.1 929.0,443.5 931.0,441.9 933.0,440.8 935.0,440.9 937.0,440.7 939.0,440.7 941.0,440.8 943.0,441.1 945.0,440.1 947.0,438.8 949.0,439.3 952.0,439.3 952.0,614.3 949.0,614.3 947.0,613.8 945.0,615.1 943.0,616.1 941.0,615.8 939.0,615.7 937.0,615.7 935.0,615.9 933.0,615.8 931.0,616.9 929.0,618.5 927.0,618.1 925.0,618.1 923.0,619.9 921.0,623.6 919.0,630.8 917.0,637.1 915.0,643.6 913.0,647.6 911.0,652.6 909.0,659.7 907.0,666.5 905.0,673.1 903.0,676.3 901.0,674.7 899.0,667.9 897.0,660.0 895.0,652.5 893.0,644.4 891.0,636.9 889.0,627.6 887.0,617.1 885.0,610.0 883.0,607.5 881.0,612.1 879.0,619.8 877.0,628.1 875.0,635.5 873.0,640.9 871.0,648.1 869.0,656.2 867.0,660.6 865.0,662.7 863.0,662.1 861.0,661.0 859.0,659.9 857.0,657.5 855.0,654.1 853.0,649.2 851.0,643.8 849.0,640.1 847.0,636.8 845.0,635.5 843.0,633.6 841.0,630.9 839.0,628.9 837.0,628.5 835.0,628.6 833.0,629.1 831.0,629.6 829.0,627.7 827.0,625.7 825.0,624.0 823.0,623.4 821.0,623.1 819.0,622.2 817.0,621.9 814.0,621.9" fill="#252525"/>
<polygon points="726.0,798.8 729.0,798.8 731.0,798.4 733.0,801.8 735.0,809.2 737.0,819.5 739.0,824.1 741.0,826.9 743.0,826.0 745.0,822.0 747.0,814.9 749.0,810.3 751.0,810.1 753.0,809.8 756.0,809.8 756.0,815.8 753.0,815.8 751.0,816.1 749.0,816.3 747.0,820.9 745.0,828.0 743.0,832.0 741.0,832.9 739.0,830.1 737.0,825.5 735.0,815.2 733.0,807.8 731.0,804.4 729.0,804.8 726.0,804.8" fill="#6b6b6b"/>
<polygon points="726.0,790.8 729.0,790.8 731.0,790.4 733.0,793.8 735.0,801.2 737.0,811.5 739.0,816.1 741.0,818.9 743.0,818.0 745.0,814.0 747.0,806.9 749.0,802.3 751.0,802.1 753.0,801.8 756.0,801.8 756.0,809.8 753.0,809.8 751.0,810.1 749.0,810.3 747.0,814.9 745.0,822.0 743.0,826.0 741.0,826.9 739.0,824.1 737.0,819.5 735.0,809.2 733.0,801.8 731.0,798.4 729.0,798.8 726.0,798.8" fill="#4c4c4c"/>
<polygon points="726.0,628.8 729.0,628.8 731.0,628.4 733.0,631.8 735.0,639.2 737.0,649.5 739.0,654.1 741.0,656.9 743.0,656.0 745.0,652.0 747.0,644.9 749.0,640.3 751.0,640.1 753.0,639.8 756.0,639.8 756.0,801.8 753.0,801.8 751.0,802.1 749.0,802.3 747.0,806.9 745.0,814.0 743.0,818.0 741.0,818.9 739.0,816.1 737.0,811.5 735.0,801.2 733.0,793.8 731.0,790.4 729.0,790.8 726.0,790.8" fill="#252525"/>
<polygon points="754.0,693.3 757.0,693.3 759.0,701.0 761.0,706.8 763.0,710.0 765.0,713.5 767.0,715.6 769.0,714.9 771.0,715.2 773.0,722.3 775.0,728.5 777.0,728.8 779.0,729.3 781.0,730.6 783.0,730.0 785.0,728.0 787.0,733.2 790.0,733.2 790.0,738.2 787.0,738.2 785.0,733.0 783.0,735.0 781.0,735.6 779.0,734.3 777.0,733.8 775.0,733.5 773.0,727.3 771.0,720.2 769.0,719.9 767.0,720.6 765.0,718.5 763.0,715.0 761.0,711.8 759.0,706.0 757.0,698.3 754.0,698.3" fill="#6b6b6b"/>
<polygon points="754.0,687.3 757.0,687.3 759.0,695.0 761.0,700.8 763.0,704.0 765.0,707.5 767.0,709.6 769.0,708.9 771.0,709.2 773.0,716.3 775.0,722.5 777.0,722.8 779.0,723.3 781.0,724.6 783.0,724.0 785.0,722.0 787.0,727.2 790.0,727.2 790.0,733.2 787.0,733.2 785.0,728.0 783.0,730.0 781.0,730.6 779.0,729.3 777.0,728.8 775.0,728.5 773.0,722.3 771.0,715.2 769.0,714.9 767.0,715.6 765.0,713.5 763.0,710.0 761.0,706.8 759.0,701.0 757.0,693.3 754.0,693.3" fill="#4c4c4c"/>
<polygon points="754.0,532.3 757.0,532.3 759.0,540.0 761.0,545.8 763.0,549.0 765.0,552.5 767.0,554.6 769.0,553.9 771.0,554.2 773.0,561.3 775.0,567.5 777.0,567.8 779.0,568.3 781.0,569.6 783.0,569.0 785.0,567.0 787.0,572.2 790.0,572.2 790.0,727.2 787.0,727.2 785.0,722.0 783.0,724.0 781.0,724.6 779.0,723.3 777.0,722.8 775.0,722.5 773.0,716.3 771.0,709.2 769.0,708.9 767.0,709.6 765.0,707.5 763.0,704.0 761.0,700.8 759.0,695.0 757.0,687.3 754.0,687.3" fill="#252525"/>
<polygon points="788.0,629.3 791.0,629.3 793.0,624.0 795.0,613.1 797.0,606.5 799.0,614.3 801.0,635.3 803.0,649.5 806.0,649.5 806.0,654.5 803.0,654.5 801.0,640.3 799.0,619.3 797.0,611.5 795.0,618.1 793.0,629.0 791.0,634.3 788.0,634.3" fill="#6b6b6b"/>
<polygon points="788.0,624.3 791.0,624.3 793.0,619.0 795.0,608.1 797.0,601.5 799.0,609.3 801.0,630.3 803.0,644.5 806.0,644.5 806.0,649.5 803.0,649.5 801.0,635.3 799.0,614.3 797.0,606.5 795.0,613.1 793.0,624.0 791.0,629.3 788.0,629.3" fill="#4c4c4c"/>
<polygon points="788.0,470.3 791.0,470.3 793.0,465.0 795.0,454.1 797.0,447.5 799.0,455.3 801.0,476.3 803.0,490.5 806.0,490.5 806.0,644.5 803.0,644.5 801.0,630.3 799.0,609.3 797.0,601.5 795.0,608.1 793.0,619.0 791.0,624.3 788.0,624.3" fill="#252525"/>
</g></g>
<g clip-path="url(#env)" fill="#fff" fill-opacity=".4" font-family="Liberation Sans,sans-serif" font-weight="bold" font-size="17">
<text x="14" y="857.8" letter-spacing=".3"><tspan dy="-2.6">-</tspan><tspan dx="2.2" dy="2.6">70 dBm</tspan></text>
<text x="14" y="945.8" letter-spacing=".3"><tspan dy="-2.6">-</tspan><tspan dx="2.2" dy="2.6">80 dBm</tspan></text>
<text x="14" y="1033.8" letter-spacing=".3"><tspan dy="-2.6">-</tspan><tspan dx="2.2" dy="2.6">90 dBm</tspan></text>
</g>
<path d="M151.5 236V1114M298.5 236V1114M446.5 236V1114M594.5 236V1114M742.5 236V1114M889.5 236V1114M1037.5 236V1114M1185.5 236V1114M1332.5 236V1114M4 323.5H1480M4 411.5H1480M4 499.5H1480M4 587.5H1480M4 675.5H1480M4 763.5H1480M4 851.5H1480M4 939.5H1480M4 1027.5H1480" stroke="#fff" stroke-opacity=".3" stroke-width="1" fill="none" clip-path="url(#env)"/>
<path d="M3.5 236V1114M1480.5 236V1114" stroke="#fff" stroke-opacity=".55" stroke-width="1" fill="none" clip-path="url(#env)"/>
<polyline points="3.5,909.4 6.8,909.1 9.5,909.1 12.3,904.7 15.0,883.0 17.5,912.4 20.9,900.6 22.9,909.2 24.8,907.2 26.7,908.6 29.8,900.4 32.4,901.8 34.7,887.5 37.8,903.0 40.0,906.0 43.0,911.4 45.4,889.2 47.2,911.9 48.5,904.0 51.3,851.5 52.5,837.5 53.7,851.5 56.5,904.0 57.3,904.6 59.4,905.9 62.5,909.4 65.0,910.6 67.0,904.6 69.5,907.4 72.9,903.1 76.1,908.3 79.3,904.7 82.6,907.3 85.7,907.6 87.6,909.6 89.8,902.5 92.3,893.2 95.0,904.0 97.1,889.5 99.3,910.7 102.6,912.2 105.8,902.1 107.8,912.2 109.9,903.4 113.1,903.2 115.1,904.9 117.3,898.7 120.1,911.9 122.2,907.4 125.6,883.0 127.1,904.4 129.5,887.7 132.3,900.8 134.4,905.6 137.6,897.8 139.5,901.6 142.4,912.5 143.8,890.0 147.6,899.9 150.7,894.6 153.6,888.9 156.0,898.6 158.7,902.4 161.5,904.9 164.3,888.8 167.3,910.6 170.0,911.4 171.9,905.3 174.7,907.1 177.6,909.8 180.9,905.6 184.0,890.0 185.2,891.2 187.7,894.9 190.6,908.5 193.7,888.8 196.1,903.0 198.1,911.4 201.3,897.9 203.5,908.7 205.8,908.4 208.6,907.7 211.7,893.5 213.6,911.6 215.5,900.9 217.8,905.3 219.8,905.7 223.0,883.0 224.8,901.9 227.6,899.0 230.9,903.9 233.5,905.6 236.1,904.1 237.5,890.0 240.9,899.5 243.4,898.3 245.3,890.6 247.3,909.9 250.6,909.5 253.8,897.9 256.3,903.9 259.3,900.4 262.2,911.8 265.6,892.6 268.7,911.9 271.8,906.1 274.3,899.4 276.9,911.2 278.8,904.1 281.1,904.4 283.2,899.7 286.3,897.9 288.9,897.6 291.1,903.2 294.0,901.3 297.2,903.0 299.6,898.3 301.7,897.8 304.4,903.9 307.0,900.7 308.9,892.8 311.3,901.0 313.9,905.0 316.6,912.2 319.8,908.8 321.8,911.2 325.1,907.7 327.2,898.1 329.2,905.3 331.3,910.3 333.6,909.8 335.6,904.5 338.2,906.9 340.9,908.1 343.3,904.2 345.4,900.4 348.1,900.6 351.3,910.7 354.4,895.0 356.7,896.1 360.1,897.0 362.2,903.4 364.2,902.1 367.3,908.3 370.2,906.9 373.0,887.8 375.0,899.4 377.6,904.0 379.5,905.8 382.2,901.0 384.3,906.9 387.4,888.3 389.4,912.2 391.9,902.9 394.4,902.1 397.2,910.4 400.4,908.7 403.3,906.9 405.4,905.4 408.6,899.9 411.8,902.3 414.6,897.6 417.7,911.9 420.7,899.0 423.1,888.8 426.0,899.4 428.5,904.9 430.8,905.6 433.2,900.5 435.3,891.2 437.7,900.9 440.3,912.5 443.2,899.4 446.5,909.8 449.5,908.3 451.4,908.1 453.0,890.0 456.0,897.8 458.7,891.5 461.8,909.7 464.9,912.0 466.9,906.7 469.5,905.0 472.0,890.0 475.6,907.5 478.4,903.2 481.4,905.6 483.6,906.6 486.6,911.8 489.6,912.4 492.9,911.8 495.4,912.3 497.6,898.0 500.5,912.4 503.6,904.6 506.4,906.9 508.3,904.5 510.8,901.9 513.0,902.1 516.1,897.5 519.4,903.6 521.4,889.9 524.2,907.4 527.1,900.8 529.9,904.0 532.1,888.4 535.3,905.9 537.5,909.9 539.5,904.9 540.6,890.0 544.2,908.8 546.4,910.7 549.5,906.3 552.6,899.3 554.8,907.3 557.8,910.1 561.2,909.3 564.2,893.8 566.6,911.6 568.5,909.4 571.1,903.1 574.2,907.0 578.0,888.0 580.0,903.2 583.3,880.0 584.0,820.0 585.7,731.0 589.0,670.7 591.5,646.0 594.5,649.7 597.3,640.3 600.8,676.5 603.0,666.0 606.7,660.0 610.0,673.0 618.3,704.5 621.8,694.0 625.0,693.0 628.0,705.7 631.0,693.0 635.0,704.5 638.0,698.7 640.5,704.5 645.0,696.0 650.5,646.0 654.5,675.0 657.5,660.0 662.7,677.7 668.5,696.0 675.5,677.7 678.0,684.7 680.0,673.0 682.5,690.5 686.0,684.7 689.5,691.7 693.0,685.8 698.4,678.8 702.3,696.0 708.0,678.8 714.0,698.7 720.0,719.7 722.0,750.0 723.3,820.0 725.3,880.0 728.0,840.0 731.5,777.0 733.4,784.0 735.0,777.0 740.8,830.7 744.3,791.0 747.8,791.0 750.2,796.8 753.7,779.3 756.0,709.3 758.3,679.0 760.2,679.0 764.2,728.0 767.2,693.0 771.2,700.0 778.2,737.3 781.2,698.8 785.2,728.0 788.2,775.8 789.8,672.0 792.2,623.0 795.7,599.7 797.5,586.8 799.9,604.3 802.2,653.3 803.8,746.7 805.5,840.0 808.0,880.0 811.0,840.0 812.0,820.0 814.3,726.7 816.7,607.7 819.0,593.7 821.0,593.7 823.2,606.5 826.0,593.7 828.3,605.0 830.7,599.5 836.5,612.0 839.0,611.0 842.3,593.7 844.3,593.7 851.7,632.0 854.5,619.0 857.5,645.0 858.7,633.0 861.5,643.8 864.5,639.0 870.0,639.0 875.0,621.7 879.2,565.7 883.0,590.0 885.5,568.0 888.5,561.0 891.0,586.7 893.0,645.0 896.0,664.8 901.0,657.8 905.0,632.0 907.7,640.0 911.0,659.0 914.7,605.0 919.0,593.7 922.0,604.0 925.0,579.7 927.5,592.5 931.0,597.0 933.3,586.7 936.0,605.0 938.5,586.7 941.5,585.5 943.3,579.7 946.0,592.5 949.0,598.0 952.0,680.0 954.0,773.0 954.8,867.0 957.0,857.7 960.2,864.1 962.5,867.4 964.5,862.2 966.8,850.0 969.6,865.8 972.1,863.8 974.6,856.3 976.7,858.4 979.3,863.7 982.4,854.9 985.4,855.8 987.8,854.8 989.8,850.0 991.8,863.4 993.7,864.0 996.5,867.7 999.4,867.3 1002.3,846.2 1005.7,863.2 1009.0,867.8 1012.3,862.5 1015.5,844.9 1018.5,859.0 1020.3,854.5 1023.6,861.5 1025.7,863.2 1027.6,865.1 1029.6,862.8 1031.4,854.8 1033.5,854.7 1035.7,867.9 1038.7,855.5 1041.5,866.7 1044.5,864.2 1046.8,851.8 1049.7,864.7 1052.3,847.8 1054.7,864.5 1057.2,854.1 1059.0,837.5 1062.1,863.8 1065.3,866.8 1068.2,862.5 1071.0,866.2 1074.4,864.6 1076.3,864.7 1078.3,857.7 1081.3,864.3 1084.5,865.2 1087.7,864.2 1090.5,865.0 1092.9,867.3 1095.9,854.9 1097.8,869.7 1100.9,861.1 1102.9,869.1 1105.9,867.5 1108.9,863.7 1112.0,856.6 1114.9,867.6 1117.3,854.7 1121.0,837.5 1123.3,863.3 1125.5,847.8 1128.4,864.8 1130.9,858.4 1132.8,861.4 1135.8,865.5 1139.0,867.0 1142.2,857.8 1144.4,859.8 1146.7,858.2 1149.9,864.6 1152.1,858.0 1154.9,867.8 1156.9,869.4 1158.8,861.4 1160.9,856.7 1163.2,867.1 1165.2,856.6 1167.8,863.9 1171.2,858.3 1174.2,859.2 1177.1,864.8 1180.1,858.2 1182.9,868.7 1184.8,864.1 1187.1,857.3 1189.9,869.4 1192.0,866.8 1195.1,866.6 1197.4,865.9 1199.8,866.3 1201.8,858.9 1204.0,868.7 1207.3,856.3 1210.6,862.8 1212.7,862.4 1215.0,868.5 1217.7,867.7 1219.9,856.2 1221.9,866.5 1225.0,871.4 1227.8,862.8 1230.4,870.3 1233.1,867.2 1234.9,869.1 1238.3,854.4 1240.6,861.2 1243.7,867.8 1247.0,870.0 1249.5,871.1 1252.9,857.4 1255.1,867.8 1257.5,856.7 1260.6,860.5 1263.2,865.3 1266.5,867.2 1268.3,865.3 1271.4,872.4 1274.2,858.1 1276.5,858.3 1278.8,869.1 1281.7,868.3 1284.0,870.6 1287.3,863.6 1290.6,870.8 1293.6,863.8 1295.9,858.3 1299.2,870.5 1301.7,872.0 1304.5,867.1 1307.4,871.6 1309.3,858.5 1311.2,852.0 1313.7,871.4 1315.7,850.8 1318.8,848.7 1322.0,868.9 1324.0,872.4 1327.1,863.9 1329.0,864.0 1331.5,872.4 1333.5,869.8 1335.5,872.9 1338.2,870.3 1341.1,852.4 1344.5,862.3 1347.5,850.0 1349.6,853.9 1352.6,865.7 1355.3,870.5 1357.4,870.8 1360.1,871.7 1363.4,864.5 1366.0,870.9 1369.0,865.2 1372.3,855.6 1374.8,867.5 1377.7,864.0 1380.0,867.1 1382.5,868.8 1385.6,864.8 1388.6,873.6 1391.3,850.1 1393.8,860.6 1396.6,865.0 1399.0,869.7 1400.9,868.2 1403.9,872.0 1405.8,872.2 1408.4,865.6 1410.4,863.3 1412.3,870.4 1415.0,869.4 1417.9,862.7 1420.9,870.8 1423.2,867.7 1425.7,869.8 1428.2,862.3 1430.9,872.8 1432.8,874.7 1434.6,868.3 1437.1,860.9 1439.2,868.0 1441.3,871.0 1444.2,869.1 1447.2,865.2 1449.4,865.7 1452.2,870.1 1455.4,870.4 1457.6,855.0 1459.8,871.7 1462.0,870.2 1464.9,871.6 1467.0,865.3 1469.6,866.0 1472.1,867.6 1474.8,863.6 1477.1,862.6 1480.5,866.0" fill="none" stroke="#ffff78" stroke-width="1" stroke-linejoin="miter"/>
</svg>
<svg class="t" role="img" aria-label="中心频率" style="left:4.00px;top:1118.15px;width:66.80px;height:16.70px;fill:#fff;" viewBox="0 -880 4000 1000"><text class="g" x="0" y="0">中心频率</text></svg>
<div class="x" style="left:75.80px;top:1116.50px;font-size:16.20px;line-height:21px;color:#fff;font-weight:bold;letter-spacing:0.88px;">: 945.000000000 MHz</div>
<div class="x" style="right:439.12px;top:1116.50px;font-size:16.20px;line-height:21px;color:#fff;font-weight:bold;letter-spacing:0.88px;">: 100.000000000 MHz</div>
<svg class="t" role="img" aria-label="频宽" style="left:1265.00px;top:1118.15px;width:33.40px;height:16.70px;fill:#fff;" viewBox="0 -880 2000 1000"><text class="g" x="0" y="0">频宽</text></svg>
<div class="b" style="left:3px;top:1138px;width:1478px;height:24px;background:linear-gradient(90deg,#0000ff 0%,#00ffff 25%,#00ff00 50%,#ffff00 75%,#ff0000 100%);"></div>
<div class="x" style="left:22.00px;top:1136.70px;font-size:23.00px;line-height:30px;color:#000;font-weight:bold;overflow:hidden;max-width:1459px">0%</div>
<div class="x" style="left:372.00px;top:1136.70px;font-size:23.00px;line-height:30px;color:#000;font-weight:bold;overflow:hidden;max-width:1109px">0%</div>
<div class="x" style="left:742.00px;top:1136.70px;font-size:23.00px;line-height:30px;color:#000;font-weight:bold;overflow:hidden;max-width:739px">1%</div>
<div class="x" style="left:1110.00px;top:1136.70px;font-size:23.00px;line-height:30px;color:#000;font-weight:bold;overflow:hidden;max-width:371px">10%</div>
<div class="x" style="left:1431.00px;top:1136.70px;font-size:23.00px;line-height:30px;color:#000;font-weight:bold;overflow:hidden;max-width:50px">100%</div>
<div class="b" style="left:1px;top:235px;width:2px;height:929.2px;background:#1a80e8;"></div>
<div class="b" style="left:1px;top:1162px;width:1482px;height:2.2px;background:#2080e0;"></div>
<div class="b" style="left:1481px;top:235px;width:2px;height:929.2px;background:#1a80e8;"></div>
<div class="b" style="left:0px;top:1165px;width:191px;height:34px;background:#404040;box-sizing:border-box;border:1px solid #5a6874;border-top:2px solid #4f6478;border-left:2px solid #4f6478;border-right:2px solid #5a6874;"></div>
<div class="b" style="left:193px;top:1165px;width:1151px;height:34px;background:#404040;box-sizing:border-box;border:1px solid #5a6874;border-top:2px solid #4f6478;border-right:2px solid #5a6874;"></div>
<svg class="t" role="img" aria-label="信息" style="left:65.00px;top:1172.75px;width:45.00px;height:22.50px;fill:#fff;" viewBox="0 -880 2000 1000"><text class="g" x="0" y="0">信息</text></svg>
<svg class="t" style="left:173px;top:1179px;width:12px;height:8px" viewBox="0 0 12 8"><path d="M1 1.5H11L6 6.5Z" fill="#fff"/></svg>
<svg class="t" style="left:1418px;top:1173px;width:142px;height:19px" viewBox="0 0 142 19"><rect x="0.6" y="0.6" width="14" height="17.8" fill="#000030" stroke="#9a9a9a" stroke-width="1.2"/><rect x="14.6" y="0.6" width="14" height="17.8" fill="#000030" stroke="#9a9a9a" stroke-width="1.2"/><rect x="28.6" y="0.6" width="14" height="17.8" fill="#2243b8" stroke="#9a9a9a" stroke-width="1.2"/><rect x="42.6" y="0.6" width="14" height="17.8" fill="#2243b8" stroke="#9a9a9a" stroke-width="1.2"/><rect x="56.6" y="0.6" width="14" height="17.8" fill="#2243b8" stroke="#9a9a9a" stroke-width="1.2"/><rect x="70.6" y="0.6" width="14" height="17.8" fill="#000030" stroke="#9a9a9a" stroke-width="1.2"/><rect x="84.6" y="0.6" width="14" height="17.8" fill="#000030" stroke="#9a9a9a" stroke-width="1.2"/><rect x="98.6" y="0.6" width="14" height="17.8" fill="#000030" stroke="#9a9a9a" stroke-width="1.2"/><rect x="112.6" y="0.6" width="14" height="17.8" fill="#000030" stroke="#9a9a9a" stroke-width="1.2"/><rect x="126.6" y="0.6" width="14" height="17.8" fill="#000030" stroke="#9a9a9a" stroke-width="1.2"/></svg>
<div class="x" style="left:1604.00px;top:1173.00px;font-size:16.50px;line-height:21px;color:#fff;font-weight:normal;">49.58</div>
<div class="x" style="left:1643.80px;top:1173.00px;font-size:16.50px;line-height:21px;color:#fff;font-weight:normal;letter-spacing:-0.60px;">&#176;C</div>
<div class="x" style="right:2.00px;top:1173.00px;font-size:16.50px;line-height:21px;color:#fff;font-weight:normal;">2024/02/22 13:36:25</div>
<svg class="t" role="img" aria-label="频率" style="left:1556.00px;top:38.25px;width:47.00px;height:23.50px;fill:#fff;" viewBox="0 -880 2000 1000"><text class="g" x="0" y="0">频率</text></svg>
<svg class="t" role="img" aria-label="控制面板" style="left:1748.00px;top:38.25px;width:94.00px;height:23.50px;fill:#fff;" viewBox="0 -880 4000 1000"><text class="g" x="0" y="0">控制面板</text></svg>
<div class="b" style="left:1485px;top:102px;width:183px;height:91.5px;background:#008080;"></div>
<svg class="t" role="img" aria-label="中心频率" style="left:1533.00px;top:136.25px;width:94.00px;height:23.50px;fill:#fff;" viewBox="0 -880 4000 1000"><text class="g" x="0" y="0">中心频率</text></svg>
<div class="b" style="left:1672.3px;top:102px;width:120.7px;height:91.5px;background:#1c76d8;"></div>
<svg class="t" role="img" aria-label="频率" style="left:1712.00px;top:136.25px;width:47.00px;height:23.50px;fill:#fff;" viewBox="0 -880 2000 1000"><text class="g" x="0" y="0">频率</text></svg>
<div class="b" style="left:1797px;top:102px;width:120.7px;height:91.5px;background:#626262;"></div>
<svg class="t" role="img" aria-label="频宽" style="left:1837.00px;top:136.25px;width:47.00px;height:23.50px;fill:#fff;" viewBox="0 -880 2000 1000"><text class="g" x="0" y="0">频宽</text></svg>
<div class="b" style="left:1672.3px;top:198px;width:120.7px;height:91.5px;background:#626262;"></div>
<svg class="t" role="img" aria-label="电平" style="left:1712.00px;top:216.25px;width:47.00px;height:23.50px;fill:#fff;" viewBox="0 -880 2000 1000"><text class="g" x="0" y="0">电平</text></svg>
<svg class="t" role="img" aria-label="设置" style="left:1712.00px;top:248.25px;width:47.00px;height:23.50px;fill:#fff;" viewBox="0 -880 2000 1000"><text class="g" x="0" y="0">设置</text></svg>
<div class="b" style="left:1797px;top:198px;width:120.7px;height:91.5px;background:#626262;"></div>
<svg class="t" role="img" aria-label="自动" style="left:1837.00px;top:216.25px;width:47.00px;height:23.50px;fill:#fff;" viewBox="0 -880 2000 1000"><text class="g" x="0" y="0">自动</text></svg>
<svg class="t" role="img" aria-label="设置" style="left:1837.00px;top:248.25px;width:47.00px;height:23.50px;fill:#fff;" viewBox="0 -880 2000 1000"><text class="g" x="0" y="0">设置</text></svg>
<div class="b" style="left:1672.3px;top:294px;width:120.7px;height:91.5px;background:#626262;"></div>
<svg class="t" role="img" aria-label="带宽" style="left:1712.00px;top:328.25px;width:47.00px;height:23.50px;fill:#fff;" viewBox="0 -880 2000 1000"><text class="g" x="0" y="0">带宽</text></svg>
<div class="b" style="left:1797px;top:294px;width:120.7px;height:91.5px;background:#626262;"></div>
<svg class="t" role="img" aria-label="扫描" style="left:1837.00px;top:328.25px;width:47.00px;height:23.50px;fill:#fff;" viewBox="0 -880 2000 1000"><text class="g" x="0" y="0">扫描</text></svg>
<div class="b" style="left:1672.3px;top:390px;width:120.7px;height:91.5px;background:#626262;"></div>
<svg class="t" role="img" aria-label="轨迹" style="left:1712.00px;top:424.25px;width:47.00px;height:23.50px;fill:#fff;" viewBox="0 -880 2000 1000"><text class="g" x="0" y="0">轨迹</text></svg>
<div class="b" style="left:1797px;top:390px;width:120.7px;height:91.5px;background:#626262;"></div>
<svg class="t" role="img" aria-label="触发" style="left:1837.00px;top:424.25px;width:47.00px;height:23.50px;fill:#fff;" viewBox="0 -880 2000 1000"><text class="g" x="0" y="0">触发</text></svg>
<div class="b" style="left:1672.3px;top:486px;width:120.7px;height:91.5px;background:#626262;"></div>
<svg class="t" role="img" aria-label="测量" style="left:1712.00px;top:520.25px;width:47.00px;height:23.50px;fill:#fff;" viewBox="0 -880 2000 1000"><text class="g" x="0" y="0">测量</text></svg>
<div class="b" style="left:1797px;top:486px;width:120.7px;height:91.5px;background:#626262;"></div>
<svg class="t" role="img" aria-label="测量" style="left:1837.00px;top:504.25px;width:47.00px;height:23.50px;fill:#fff;" viewBox="0 -880 2000 1000"><text class="g" x="0" y="0">测量</text></svg>
<svg class="t" role="img" aria-label="配置" style="left:1837.00px;top:536.25px;width:47.00px;height:23.50px;fill:#fff;" viewBox="0 -880 2000 1000"><text class="g" x="0" y="0">配置</text></svg>
<div class="b" style="left:1672.3px;top:582px;width:120.7px;height:91.5px;background:#626262;"></div>
<svg class="t" role="img" aria-label="标记" style="left:1712.00px;top:616.25px;width:47.00px;height:23.50px;fill:#fff;" viewBox="0 -880 2000 1000"><text class="g" x="0" y="0">标记</text></svg>
<div class="b" style="left:1797px;top:582px;width:120.7px;height:91.5px;background:#626262;"></div>
<svg class="t" role="img" aria-label="标记" style="left:1837.00px;top:600.25px;width:47.00px;height:23.50px;fill:#fff;" viewBox="0 -880 2000 1000"><text class="g" x="0" y="0">标记</text></svg>
<svg class="t" role="img" aria-label="搜索" style="left:1837.00px;top:632.25px;width:47.00px;height:23.50px;fill:#fff;" viewBox="0 -880 2000 1000"><text class="g" x="0" y="0">搜索</text></svg>
<div class="b" style="left:1672.3px;top:678px;width:120.7px;height:91.5px;background:#808000;"></div>
<svg class="t" role="img" aria-label="运行" style="left:1712.00px;top:696.25px;width:47.00px;height:23.50px;fill:#fff;" viewBox="0 -880 2000 1000"><text class="g" x="0" y="0">运行</text></svg>
<svg class="t" role="img" aria-label="单次" style="left:1712.00px;top:728.25px;width:47.00px;height:23.50px;fill:#fff;" viewBox="0 -880 2000 1000"><text class="g" x="0" y="0">单次</text></svg>
<div class="b" style="left:1797px;top:678px;width:120.7px;height:91.5px;background:#808000;"></div>
<svg class="t" role="img" aria-label="运行" style="left:1837.00px;top:696.25px;width:47.00px;height:23.50px;fill:#fff;" viewBox="0 -880 2000 1000"><text class="g" x="0" y="0">运行</text></svg>
<svg class="t" role="img" aria-label="连续" style="left:1837.00px;top:728.25px;width:47.00px;height:23.50px;fill:#fff;" viewBox="0 -880 2000 1000"><text class="g" x="0" y="0">连续</text></svg>
<div class="b" style="left:1672.3px;top:774px;width:120.7px;height:91.5px;background:#626262;"></div>
<svg class="t" role="img" aria-label="文件" style="left:1712.00px;top:808.25px;width:47.00px;height:23.50px;fill:#fff;" viewBox="0 -880 2000 1000"><text class="g" x="0" y="0">文件</text></svg>
<div class="b" style="left:1797px;top:774px;width:120.7px;height:91.5px;background:#626262;"></div>
<svg class="t" role="img" aria-label="模式" style="left:1837.00px;top:808.25px;width:47.00px;height:23.50px;fill:#fff;" viewBox="0 -880 2000 1000"><text class="g" x="0" y="0">模式</text></svg>
<div class="b" style="left:1903px;top:683px;width:10px;height:10px;border-radius:5px;background:#0000ff"></div>
<div class="b" style="left:1672.3px;top:870px;width:245.4px;height:91.5px;background:#626262;"></div>
<svg class="t" role="img" aria-label="显示" style="left:1775.50px;top:904.25px;width:47.00px;height:23.50px;fill:#fff;" viewBox="0 -880 2000 1000"><text class="g" x="0" y="0">显示</text></svg>
<div class="b" style="left:1672.3px;top:966px;width:245.4px;height:91.5px;background:#626262;"></div>
<svg class="t" role="img" aria-label="设备" style="left:1775.50px;top:1000.25px;width:47.00px;height:23.50px;fill:#fff;" viewBox="0 -880 2000 1000"><text class="g" x="0" y="0">设备</text></svg>
<div class="b" style="left:1672.3px;top:1062px;width:245.4px;height:91.5px;background:#626262;"></div>
<svg class="t" role="img" aria-label="复位" style="left:1775.50px;top:1096.25px;width:47.00px;height:23.50px;fill:#fff;" viewBox="0 -880 2000 1000"><text class="g" x="0" y="0">复位</text></svg>
</body></html>
